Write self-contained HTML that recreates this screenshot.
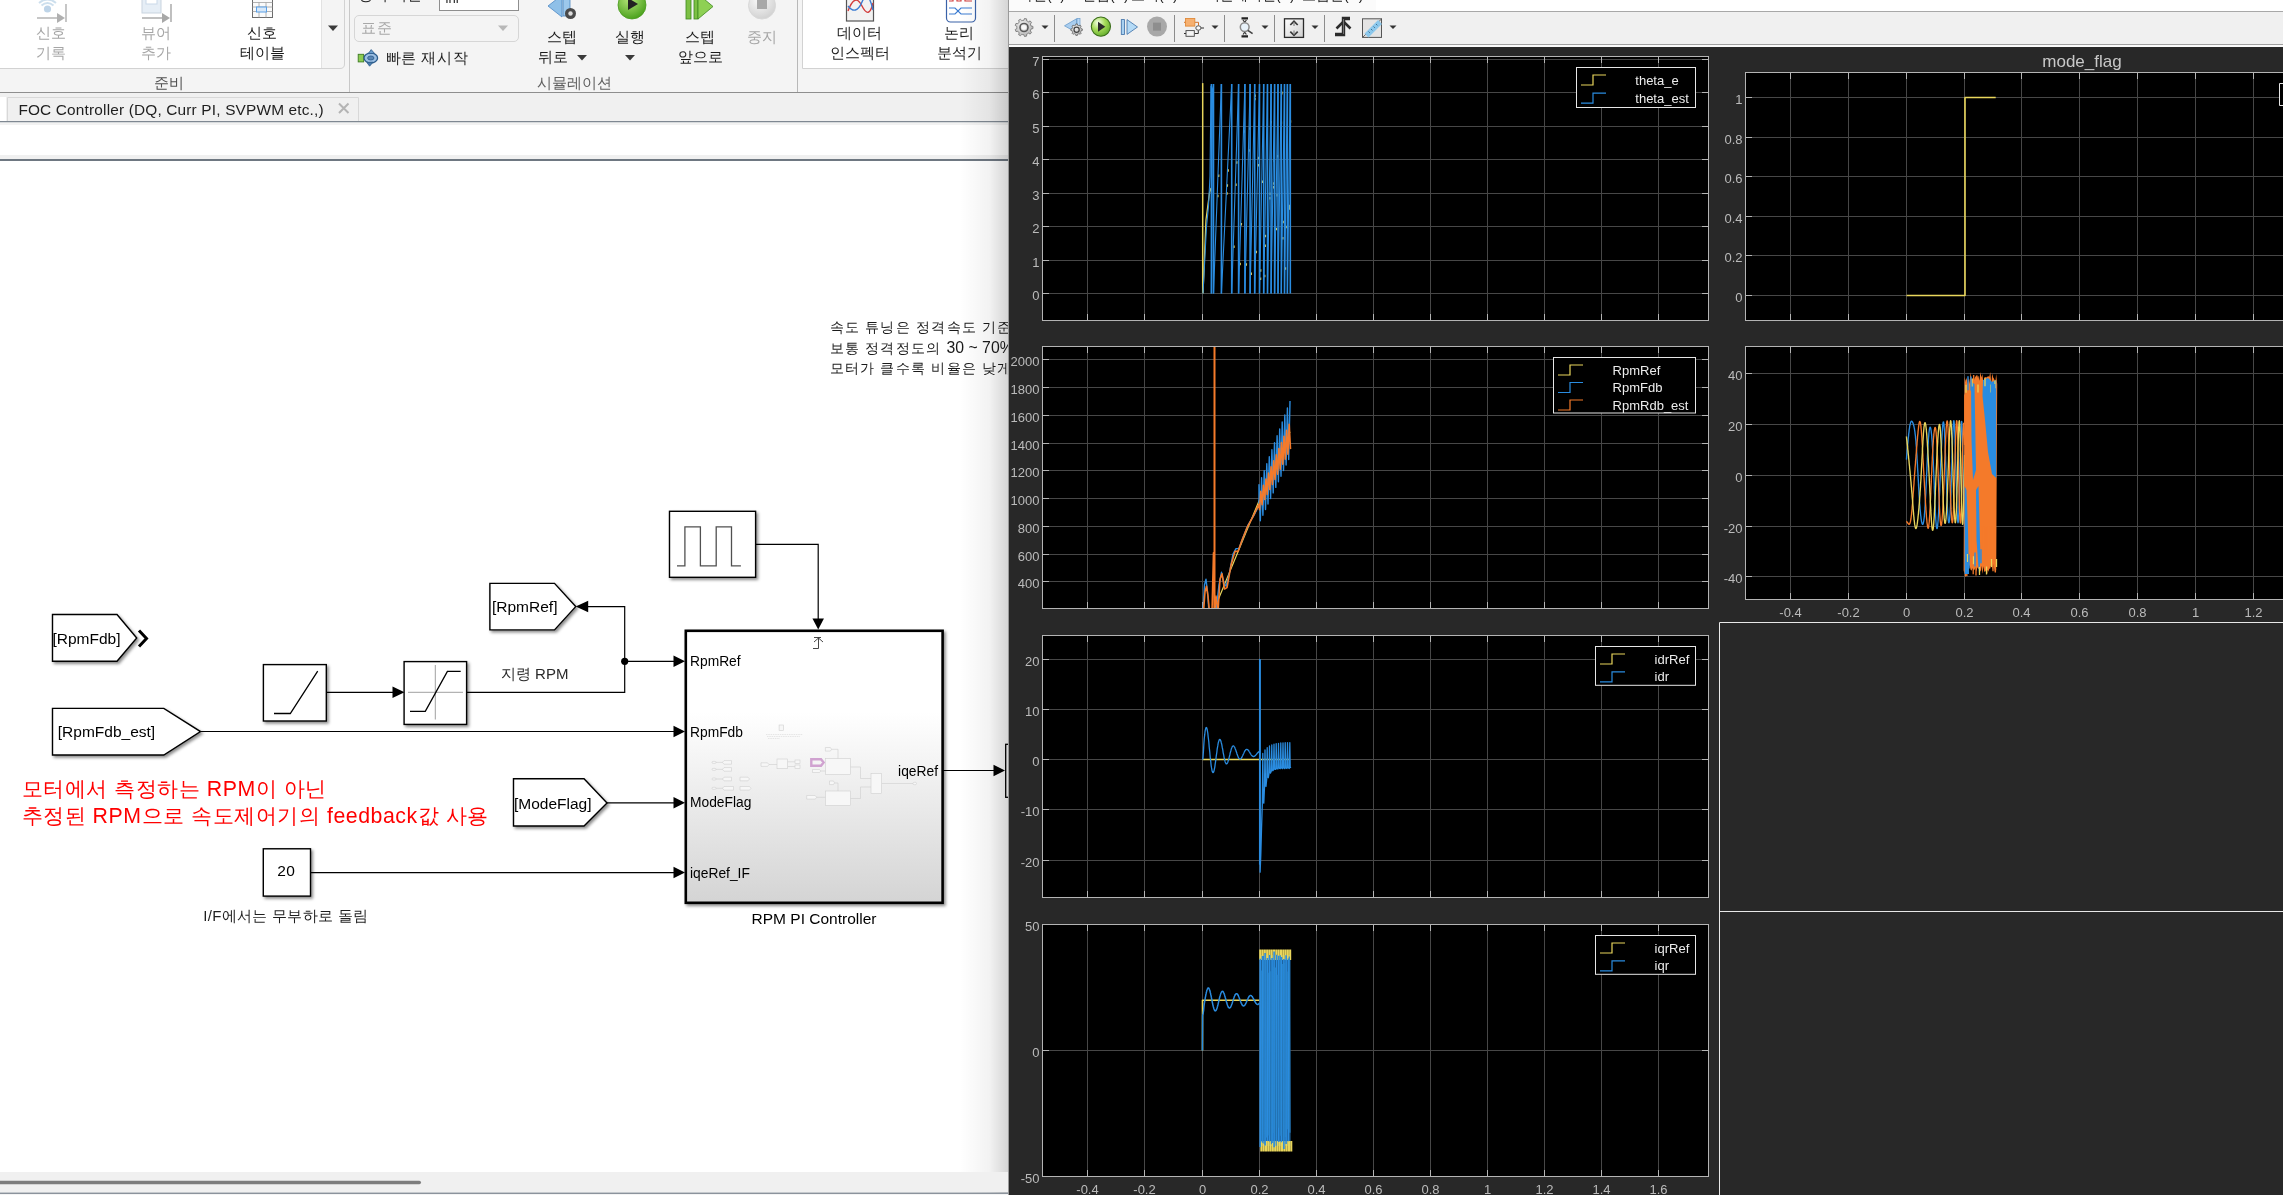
<!DOCTYPE html>
<html><head><meta charset="utf-8"><style>
html,body{margin:0;padding:0;width:2283px;height:1195px;overflow:hidden;background:#fff;font-family:"Liberation Sans",sans-serif;}
svg{display:block;will-change:transform}
</style></head><body>
<svg width="2283" height="1195" viewBox="0 0 2283 1195">
<rect x="0" y="0" width="1009" height="92" fill="#f4f4f4"/>
<rect x="0" y="0" width="322" height="68" fill="#ffffff"/>
<path d="M321.5 0V68" stroke="#e2e2e2" stroke-width="1"/>
<path d="M0 68.5H340Q344.5 68.5 344.5 64V0" stroke="#d2d2d2" stroke-width="1" fill="none"/>
<path d="M349.5 0V92" stroke="#c8c8c8" stroke-width="1"/>
<path d="M797.5 0V92" stroke="#b8b8b8" stroke-width="1"/>
<rect x="802" y="0" width="207" height="68" fill="#ffffff"/>
<path d="M802.5 0V68.5H1009" stroke="#d2d2d2" stroke-width="1" fill="none"/>
<rect x="0" y="92" width="1009" height="1" fill="#8e8e8e"/>
<g opacity="0.9"><circle cx="47.5" cy="9" r="3.6" fill="#b8d0e6"/><path d="M39 3Q47.5 -4 56 3M41.5 5.5Q47.5 0.5 53.5 5.5" stroke="#c8dcec" stroke-width="2" fill="none"/><path d="M37 18H60" stroke="#b0b0b0" stroke-width="1.6"/><path d="M57 13L65 18L57 23Z" fill="#a8a8a8"/><path d="M66 4V22" stroke="#b0b0b0" stroke-width="1.6"/></g>
<g><rect x="142" y="-4" width="19" height="17" fill="#e6eef6" stroke="#c9d4df"/><rect x="146" y="-4" width="11" height="8" fill="#fff" stroke="#c9d8e8"/><path d="M142 18H165" stroke="#b0b0b0" stroke-width="1.6"/><path d="M162 13L170 18L162 23Z" fill="#a8a8a8"/><path d="M171 4V22" stroke="#b0b0b0" stroke-width="1.6"/></g>
<g><rect x="252.5" y="-3" width="20" height="20.5" fill="#fafafa" stroke="#6c6c6c"/><path d="M252.5 2.5H272.5M252.5 7H272.5M252.5 11.5H272.5M259 2.5V17.5M266 2.5V17.5" stroke="#a0a0a0" stroke-width="0.8"/><rect x="256.5" y="7" width="10" height="5" fill="#d8e8f8" stroke="#5aa0e6" stroke-width="1"/><rect x="253" y="-3" width="5" height="3" fill="#1a4fa0"/></g>
<text x="51" y="38" font-family="Liberation Sans" font-size="14.5" fill="#a6a6a6" text-anchor="middle" >신호</text>
<text x="51" y="58" font-family="Liberation Sans" font-size="14.5" fill="#a6a6a6" text-anchor="middle" >기록</text>
<text x="156" y="38" font-family="Liberation Sans" font-size="14.5" fill="#a6a6a6" text-anchor="middle" >뷰어</text>
<text x="156" y="58" font-family="Liberation Sans" font-size="14.5" fill="#a6a6a6" text-anchor="middle" >추가</text>
<text x="262" y="38" font-family="Liberation Sans" font-size="14.5" fill="#1c1c1c" text-anchor="middle" >신호</text>
<text x="262" y="58" font-family="Liberation Sans" font-size="14.5" fill="#1c1c1c" text-anchor="middle" >테이블</text>
<path d="M328 25.5H338L333 31Z" fill="#3a3a3a"/>
<text x="169" y="88" font-family="Liberation Sans" font-size="14.5" fill="#505050" text-anchor="middle" >준비</text>
<text x="358" y="0.3" font-family="Liberation Sans" font-size="14.5" fill="#222" text-anchor="start" >정지 시간</text>
<rect x="439.5" y="-3" width="79" height="13.5" fill="#fff" stroke="#8e8e8e"/>
<text x="445.5" y="3" font-family="Liberation Sans" font-size="13" fill="#222" text-anchor="start" >inf</text>
<rect x="354.5" y="15.5" width="164" height="26" rx="4.5" fill="#f4f4f4" stroke="#d6d6d6"/>
<text x="361" y="33" font-family="Liberation Sans" font-size="14.5" fill="#a8a8a8" text-anchor="start" letter-spacing="1">표준</text>
<path d="M498 25.5H508L503 31Z" fill="#b8b8b8"/>
<rect x="358.2" y="54.3" width="5.5" height="7.6" fill="#8ccc52" stroke="#3c7a22" stroke-width="0.9"/>
<ellipse cx="370.8" cy="58" rx="6.8" ry="5" fill="#9cc0e4" stroke="#2c5c8c" stroke-width="1.3"/>
<ellipse cx="370.8" cy="58" rx="3.2" ry="2" fill="#5a86b4" stroke="#2c5c8c" stroke-width="0.8"/>
<path d="M368.3 53.6L371.2 49.6L374.5 53.4Z" fill="#6a9ccc" stroke="#2c5c8c" stroke-width="0.8"/><path d="M366.8 62.4L369.6 66.2L373 62.2Z" fill="#4a7cac" stroke="#2c5c8c" stroke-width="0.8"/>
<text x="385.5" y="63" font-family="Liberation Sans" font-size="14.5" fill="#1c1c1c" text-anchor="start" letter-spacing="0.6">빠른 재시작</text>
<path d="M548 6L562 -5V17Z" fill="#8fc0e8" stroke="#4c88c4" stroke-width="0.8"/><rect x="563" y="-5" width="7" height="21" fill="#9cc8ec" stroke="#4c88c4" stroke-width="0.8"/>
<circle cx="570.5" cy="13.5" r="5.5" fill="#4a4a4a"/><circle cx="570.5" cy="13.5" r="2.2" fill="#ddd"/>
<text x="561.5" y="42" font-family="Liberation Sans" font-size="14.5" fill="#1c1c1c" text-anchor="middle" >스텝</text>
<text x="553" y="62" font-family="Liberation Sans" font-size="14.5" fill="#1c1c1c" text-anchor="middle" >뒤로</text>
<path d="M577 55H587L582 60.5Z" fill="#3a3a3a"/>
<defs><radialGradient id="gr" cx="0.4" cy="0.3" r="0.7"><stop offset="0" stop-color="#b6e67a"/><stop offset="1" stop-color="#4ca21e"/></radialGradient><radialGradient id="gg" cx="0.4" cy="0.3" r="0.7"><stop offset="0" stop-color="#fafafa"/><stop offset="1" stop-color="#d2d2d2"/></radialGradient></defs>
<circle cx="632" cy="5" r="14" fill="url(#gr)" stroke="#4a9a20" stroke-width="0.8"/><path d="M628 -2L638 4L628 10Z" fill="#222"/>
<text x="630" y="42" font-family="Liberation Sans" font-size="14.5" fill="#1c1c1c" text-anchor="middle" >실행</text>
<path d="M625 55H635L630 60.5Z" fill="#3a3a3a"/>
<rect x="686" y="-4" width="5" height="23" fill="#7cc044" stroke="#3e8a1e" stroke-width="0.8"/><rect x="694" y="-4" width="4" height="23" fill="#7cc044" stroke="#3e8a1e" stroke-width="0.8"/>
<path d="M698 -6L713 6.5L698 19Z" fill="#8ed054" stroke="#3e8a1e" stroke-width="0.8"/>
<text x="700" y="42" font-family="Liberation Sans" font-size="14.5" fill="#1c1c1c" text-anchor="middle" >스텝</text>
<text x="700" y="62" font-family="Liberation Sans" font-size="14.5" fill="#1c1c1c" text-anchor="middle" >앞으로</text>
<circle cx="762" cy="5.5" r="13.5" fill="url(#gg)" stroke="#d8d8d8"/><rect x="757" y="0" width="10" height="9" fill="#a8a8a8"/>
<text x="761.5" y="42" font-family="Liberation Sans" font-size="14.5" fill="#a6a6a6" text-anchor="middle" >중지</text>
<text x="574" y="88" font-family="Liberation Sans" font-size="14.5" fill="#606060" text-anchor="middle" >시뮬레이션</text>
<rect x="846.5" y="-4" width="27" height="25" fill="#f2f2f2" stroke="#555" stroke-width="1.2"/>
<path d="M848 11Q855 -8 862 6T873 3" stroke="#d23c3c" stroke-width="1.4" fill="none"/><path d="M848 6Q856 16 862 2T873 10" stroke="#3c7cd2" stroke-width="1.4" fill="none"/>
<text x="859.5" y="38" font-family="Liberation Sans" font-size="14.5" fill="#1c1c1c" text-anchor="middle" >데이터</text>
<text x="859.5" y="58" font-family="Liberation Sans" font-size="14.5" fill="#1c1c1c" text-anchor="middle" >인스펙터</text>
<rect x="946.5" y="-6" width="29" height="28" rx="4" fill="#fff" stroke="#3a62a8" stroke-width="1.2"/>
<path d="M949 1H953V-4H957V1H961V-4H965V1H972" stroke="#d23c3c" stroke-width="1.2" fill="none"/><path d="M949 8H955L961 14H972M949 14H955L961 8H972" stroke="#3c7cd2" stroke-width="1.2" fill="none"/>
<text x="959" y="38" font-family="Liberation Sans" font-size="14.5" fill="#1c1c1c" text-anchor="middle" >논리</text>
<text x="959" y="58" font-family="Liberation Sans" font-size="14.5" fill="#1c1c1c" text-anchor="middle" >분석기</text>
<rect x="0" y="93" width="1009" height="28" fill="#f0f0f0"/>
<rect x="0" y="97" width="6" height="24" fill="#ffffff"/>
<path d="M7.5 121V97.5H358.5V121" stroke="#d8d8d8" stroke-width="1" fill="#f0f0f0"/>
<text x="18.4" y="114.8" font-family="Liberation Sans" font-size="15.4" fill="#1e1e1e" text-anchor="start" letter-spacing="0.17">FOC Controller (DQ, Curr PI, SVPWM etc.,)</text>
<path d="M339 103.5L348.5 113M348.5 103.5L339 113" stroke="#b4b4b4" stroke-width="2"/>
<rect x="0" y="121" width="1009" height="1.5" fill="#7f8892"/>
<rect x="0" y="122.5" width="1009" height="2.5" fill="#f2f2f2"/>
<rect x="0" y="125" width="1009" height="30" fill="#ffffff"/>
<rect x="0" y="155" width="1009" height="4" fill="#f0f0f0"/>
<rect x="0" y="159" width="1009" height="2" fill="#6e7781"/>
<rect x="0" y="161" width="1009" height="1011" fill="#ffffff"/>
<defs><filter id="sh" x="-10%" y="-10%" width="130%" height="130%"><feDropShadow dx="1.8" dy="2" stdDeviation="1.6" flood-color="#000" flood-opacity="0.45"/></filter><linearGradient id="subg" x1="0" y1="0" x2="0" y2="1"><stop offset="0.3" stop-color="#ffffff"/><stop offset="1" stop-color="#d4d4d4"/></linearGradient><linearGradient id="wsh" x1="0" y1="0" x2="1" y2="0"><stop offset="0" stop-color="#000" stop-opacity="0"/><stop offset="0.6" stop-color="#000" stop-opacity="0.05"/><stop offset="1" stop-color="#000" stop-opacity="0.17"/></linearGradient></defs>
<text x="829.5" y="332.2" font-family="Liberation Sans" font-size="14" fill="#1a1a1a" letter-spacing="1.25">속도 튜닝은 정격속도 기준으로</text>
<text x="829.5" y="352.9" font-family="Liberation Sans" font-size="14" fill="#1a1a1a" letter-spacing="1.25">보통 정격정도의 <tspan font-size="15.8" letter-spacing="0">30 ~ 70%</tspan> 수준</text>
<text x="829.5" y="373.2" font-family="Liberation Sans" font-size="14" fill="#1a1a1a" letter-spacing="1.25">모터가 클수록 비율은 낮게 설정</text>
<path d="M52.5 614.5H117L136.7 638L117 661.2H52.5Z" fill="#fff" stroke="#000" stroke-width="1.4" filter="url(#sh)"/>
<text x="52.5" y="643.8" font-family="Liberation Sans" font-size="15.5" fill="#000" text-anchor="start" >[RpmFdb]</text>
<path d="M139 630.5L146.5 638.5L139 646.5" stroke="#000" stroke-width="3" fill="none"/>
<path d="M52.5 708.4H163.8L200.5 731.6L163.8 755H52.5Z" fill="#fff" stroke="#000" stroke-width="1.4" filter="url(#sh)"/>
<text x="57.8" y="736.8" font-family="Liberation Sans" font-size="15.5" fill="#000" text-anchor="start" >[RpmFdb_est]</text>
<path d="M200.5 731.5H674" stroke="#000" stroke-width="1.2"/>
<path d="M685 731.5L673.5 725.75V737.25Z" fill="#000"/>
<rect x="263.4" y="664.6" width="62.9" height="56.4" fill="#fff" stroke="#000" stroke-width="1.4" filter="url(#sh)"/>
<path d="M274 713.5H290.3L317.7 671.2" stroke="#000" stroke-width="1.3" fill="none"/>
<path d="M326.3 692.3H393" stroke="#000" stroke-width="1.2"/>
<path d="M404.5 692.3L392.5 686.55V698.05Z" fill="#000"/>
<rect x="404.1" y="661.6" width="62.5" height="62.8" fill="#fff" stroke="#000" stroke-width="1.4" filter="url(#sh)"/>
<path d="M435.3 665V719.5M408 692.3H463" stroke="#a0a0a0" stroke-width="1"/>
<path d="M410 711.3H425.3L447.4 671.4H460.7" stroke="#000" stroke-width="1.3" fill="none"/>
<path d="M466.6 692.3H624.7V606.6H588" stroke="#000" stroke-width="1.2" fill="none"/>
<path d="M575.7 606.6L588.2 600.85V612.35Z" fill="#000"/>
<circle cx="624.7" cy="661.3" r="3.6" fill="#000"/>
<path d="M624.7 661.3H674" stroke="#000" stroke-width="1.2"/>
<path d="M685 661.3L673.5 655.55V667.05Z" fill="#000"/>
<path d="M489.9 583.4H554.5L575.7 606.6L554.5 629.9H489.9Z" fill="#fff" stroke="#000" stroke-width="1.4" filter="url(#sh)"/>
<text x="492" y="611.8" font-family="Liberation Sans" font-size="15.5" fill="#000" text-anchor="start" >[RpmRef]</text>
<text x="500.9" y="679.1" font-family="Liberation Sans" font-size="15" fill="#2a2a2a" text-anchor="start" >지령 RPM</text>
<rect x="669.5" y="511.3" width="86.1" height="66" fill="#fff" stroke="#000" stroke-width="1.4" filter="url(#sh)"/>
<path d="M677 565.8H684.9V526.8H700.4V565.8H716.2V526.8H731.5V565.8H740.9" stroke="#505050" stroke-width="1.3" fill="none"/>
<path d="M755.6 544.4H818.2V619" stroke="#000" stroke-width="1.2" fill="none"/>
<path d="M818.2 629.5L812.45 618.5H823.95Z" fill="#000"/>
<rect x="685.8" y="630.8" width="256.8" height="272" fill="url(#subg)" stroke="#000" stroke-width="2.6" filter="url(#sh)"/>
<g stroke="#cfcfcf" stroke-width="0.6" fill="#f7f7f7"><rect x="779.1" y="725" width="4.5" height="5.6"/><path d="M766 734.5h37M767 736.5h33M768 738.5h12" stroke="#dcdcdc" stroke-width="0.7" fill="none" stroke-dasharray="1.5 0.8"/><path d="M716 762.4h8M716 769.4h8M716 779h8M716 788.3h8" fill="none"/><rect x="712" y="761.4" width="4" height="2" rx="1"/><rect x="712" y="768.4" width="4" height="2" rx="1"/><rect x="712" y="778" width="4" height="2" rx="1"/><rect x="712" y="787.3" width="4" height="2" rx="1"/><path d="M724 760.6h7.5v3.6h-7.5l-1.5-1.8z"/><path d="M724 767.6h7.5v3.6h-7.5l-1.5-1.8z"/><path d="M724 777.2h7.5v3.6h-7.5l-1.5-1.8z"/><path d="M724 786.5h9.5v3.6h-9.5l-1.5-1.8z"/><path d="M740 777.2h8l1.5 1.8-1.5 1.8h-8z"/><path d="M740 786.5h9.5l1.5 1.8-1.5 1.8h-9.5z"/><path d="M761 762.8h6.5l1.5 1.8-1.5 1.8h-6.5z"/><path d="M769 764.5h8M787.6 761.8h7.5M787.6 766.5h7.5" fill="none"/><rect x="777" y="759" width="10.6" height="9.7"/><rect x="795" y="760" width="5" height="3.5"/><rect x="795" y="765" width="5" height="3.5"/><rect x="825.4" y="758.5" width="25.2" height="16"/><rect x="825.4" y="791" width="25.2" height="14.5"/><path d="M825.4 747.5h5l1.2 1.8-1.2 1.8h-5z"/><path d="M831.6 749.3h6.4v9.2M834 783h4v8" fill="none"/><path d="M829.5 781h4l1 1.8-1 1.8h-4z"/><path d="M812.5 769.5h7l1.3 1.5-1.3 1.5h-7z"/><path d="M820.8 771h4.6" fill="none"/><path d="M806.7 795.5h8.5l1.5 1.8-1.5 1.8h-8.5z"/><path d="M816.7 797.3h8.7" fill="none"/><path d="M850.6 767H860.5V778.5H871M850.6 798.5H860.5V787H871M881.6 783.5H913" fill="none"/><rect x="871" y="773.3" width="10.6" height="20.2"/><rect x="913" y="782.3" width="3.5" height="2.4" rx="1.2"/></g>
<path d="M811.3 759.3H821L823.6 762.5L821 765.8H811.3Z" fill="none" stroke="#d0a2d0" stroke-width="2.4"/>
<path d="M813 648.5H818.5M818.5 648.5V638M814 642L818.5 638L823 642M814 637.5H821" stroke="#333" stroke-width="0.9" fill="none"/>
<text x="690" y="666.4" font-family="Liberation Sans" font-size="13.8" fill="#000" text-anchor="start" >RpmRef</text>
<text x="690" y="736.9" font-family="Liberation Sans" font-size="13.8" fill="#000" text-anchor="start" >RpmFdb</text>
<text x="690" y="806.6" font-family="Liberation Sans" font-size="13.8" fill="#000" text-anchor="start" >ModeFlag</text>
<text x="690" y="877.8" font-family="Liberation Sans" font-size="13.8" fill="#000" text-anchor="start" >iqeRef_IF</text>
<text x="938" y="775.9" font-family="Liberation Sans" font-size="13.8" fill="#000" text-anchor="end" >iqeRef</text>
<text x="814" y="924" font-family="Liberation Sans" font-size="15.5" fill="#000" text-anchor="middle" >RPM PI Controller</text>
<path d="M513.5 778.8H584L607 803L584 826H513.5Z" fill="#fff" stroke="#000" stroke-width="1.4" filter="url(#sh)"/>
<text x="514" y="808.5" font-family="Liberation Sans" font-size="15.5" fill="#000" text-anchor="start" >[ModeFlag]</text>
<path d="M607 802.8H674" stroke="#000" stroke-width="1.2"/>
<path d="M685 802.8L673.5 797.05V808.55Z" fill="#000"/>
<rect x="263.3" y="848.8" width="47.2" height="47.3" fill="#fff" stroke="#000" stroke-width="1.4" filter="url(#sh)"/>
<text x="286.3" y="875.9" font-family="Liberation Sans" font-size="15.5" fill="#000" text-anchor="middle" letter-spacing="0.5">20</text>
<path d="M310.5 872.6H674" stroke="#000" stroke-width="1.2"/>
<path d="M685 872.6L673.5 866.85V878.35Z" fill="#000"/>
<text x="203.3" y="921" font-family="Liberation Sans" font-size="15" fill="#1e1e1e" text-anchor="start" letter-spacing="0.3">I/F에서는 무부하로 돌림</text>
<path d="M943 770.5H994" stroke="#000" stroke-width="1.2"/>
<path d="M1005 770.5L993.5 764.75V776.25Z" fill="#000"/>
<rect x="1005.7" y="744.3" width="20" height="53" fill="#fff" stroke="#000" stroke-width="1.3"/>
<text x="21.5" y="796.2" font-family="Liberation Sans" font-size="21.3" fill="#ff0000" text-anchor="start" letter-spacing="0.55">모터에서 측정하는 RPM이 아닌</text>
<text x="21.5" y="823" font-family="Liberation Sans" font-size="21.3" fill="#ff0000" text-anchor="start" letter-spacing="0.55">추정된 RPM으로 속도제어기의 feedback값 사용</text>
<rect x="960" y="0" width="49" height="1195" fill="url(#wsh)"/>
<rect x="0" y="1172" width="1009" height="20" fill="#f0f0f0"/>
<rect x="-3" y="1180.8" width="424" height="3.4" rx="1.7" fill="#7d7d7d"/>
<rect x="0" y="1192.5" width="1009" height="1.5" fill="#8b939c"/>
<rect x="0" y="1194" width="1009" height="1" fill="#f4f4f4"/>
<defs><clipPath id="c1"><rect x="1043" y="57" width="665" height="263"/></clipPath><clipPath id="c3"><rect x="1043" y="347" width="665" height="261"/></clipPath><clipPath id="c4"><rect x="1746" y="347" width="554" height="252"/></clipPath><clipPath id="c5"><rect x="1043" y="636" width="665" height="261"/></clipPath><clipPath id="c7"><rect x="1043" y="925" width="665" height="251"/></clipPath></defs>
<rect x="1009" y="0" width="1274" height="1195" fill="#282828"/>
<rect x="1009" y="0" width="1274" height="11" fill="#fbfbfb"/>
<rect x="1009" y="11" width="1274" height="1" fill="#a8a8a8"/>
<rect x="1009" y="12" width="1274" height="32" fill="#f0f0f0"/>
<rect x="1009" y="44" width="1274" height="1" fill="#a0a0a0"/>
<rect x="1009" y="45" width="1274" height="2" fill="#fafafa"/>
<rect x="1008" y="0" width="1" height="1195" fill="#9a9a9a"/>
<rect x="1042" y="56" width="667" height="265" fill="#000"/>
<path d="M1087.5 56V320M1144.5 56V320M1202.5 56V320M1259.5 56V320M1316.5 56V320M1373.5 56V320M1430.5 56V320M1487.5 56V320M1544.5 56V320M1601.5 56V320M1658.5 56V320M1042 293.5H1708M1042 260.5H1708M1042 226.5H1708M1042 193.5H1708M1042 159.5H1708M1042 126.5H1708M1042 92.5H1708M1042 59.5H1708" stroke="#474747" stroke-width="1" fill="none"/>
<path d="M1087.5 57v6M1087.5 320v-6M1144.5 57v6M1144.5 320v-6M1202.5 57v6M1202.5 320v-6M1259.5 57v6M1259.5 320v-6M1316.5 57v6M1316.5 320v-6M1373.5 57v6M1373.5 320v-6M1430.5 57v6M1430.5 320v-6M1487.5 57v6M1487.5 320v-6M1544.5 57v6M1544.5 320v-6M1601.5 57v6M1601.5 320v-6M1658.5 57v6M1658.5 320v-6M1043 293.5h6M1708 293.5h-6M1043 260.5h6M1708 260.5h-6M1043 226.5h6M1708 226.5h-6M1043 193.5h6M1708 193.5h-6M1043 159.5h6M1708 159.5h-6M1043 126.5h6M1708 126.5h-6M1043 92.5h6M1708 92.5h-6M1043 59.5h6M1708 59.5h-6" stroke="#b4b4b4" stroke-width="1" fill="none"/>
<rect x="1042.5" y="56.5" width="666" height="264" fill="none" stroke="#b4b4b4" stroke-width="1"/>
<text x="1039.5" y="299.7" text-anchor="end" font-family="Liberation Sans" font-size="13" fill="#bbbbbb">0</text>
<text x="1039.5" y="266.7" text-anchor="end" font-family="Liberation Sans" font-size="13" fill="#bbbbbb">1</text>
<text x="1039.5" y="232.7" text-anchor="end" font-family="Liberation Sans" font-size="13" fill="#bbbbbb">2</text>
<text x="1039.5" y="199.7" text-anchor="end" font-family="Liberation Sans" font-size="13" fill="#bbbbbb">3</text>
<text x="1039.5" y="165.7" text-anchor="end" font-family="Liberation Sans" font-size="13" fill="#bbbbbb">4</text>
<text x="1039.5" y="132.7" text-anchor="end" font-family="Liberation Sans" font-size="13" fill="#bbbbbb">5</text>
<text x="1039.5" y="98.7" text-anchor="end" font-family="Liberation Sans" font-size="13" fill="#bbbbbb">6</text>
<text x="1039.5" y="65.7" text-anchor="end" font-family="Liberation Sans" font-size="13" fill="#bbbbbb">7</text>
<polyline points="1202.7,83.1 1202.7,292.8" fill="none" stroke="#e9d65c" stroke-width="1.5" stroke-linejoin="round" clip-path="url(#c1)" />
<path d="M1203 293.5L1206 219.8L1209.5 193L1211 188" stroke="#e9d65c" stroke-width="1.3" fill="none" clip-path="url(#c1)"/>
<path d="M1217.9 197.3l0.1 -2.5M1218.7 177l0.1 -2.5M1221.3 108l0.1 -2.5M1227 194.8l0.1 -2.5M1227.4 186.8l0.1 -2.5M1228.2 171.8l0.1 -2.5M1234 248l0.1 -2.5M1236 186.1l0.1 -2.5M1236.8 163.7l0.1 -2.5M1244.2 132.8l0.1 -2.5M1240.2 265.2l0.1 -2.5M1241.4 225.5l0.1 -2.5M1246.4 265.8l0.1 -2.5M1249.7 129.7l0.1 -2.5M1249.2 151.7l0.1 -2.5M1251.3 275.1l0.1 -2.5M1255.2 97l0.1 -2.5M1255.1 100.3l0.1 -2.5M1258.6 159.2l0.1 -2.5M1258.4 166.4l0.1 -2.5M1256.4 253.2l0.1 -2.5M1260.6 280.1l0.1 -2.5M1262.5 182.9l0.1 -2.5M1260.7 271.7l0.1 -2.5M1265.3 247l0 -2.5M1265.5 237.2l0 -2.5M1264.8 277.3l0 -2.5M1270 195.1l0 -2.5M1269.9 199.6l0 -2.5M1271.2 123.5l0 -2.5M1273.7 184.7l0 -2.5M1274.1 161.7l0 -2.5M1273.6 188.4l0 -2.5M1277.6 157.6l0 -2.5M1277 196.4l0 -2.5M1276.4 230.3l0 -2.5M1281.9 94.1l0 -2.5M1281.9 94.5l0 -2.5M1281.5 123.9l0 -2.5M1284.3 149l0 -2.5M1283.2 223.3l0 -2.5M1282.9 239.5l0 -2.5M1286.2 228.3l0 -2.5M1285.6 269.7l0 -2.5M1287.4 137.9l0 -2.5M1289.4 207.2l0 -2.5M1290.6 122.7l0 -2.5M1289.4 209.8l0 -2.5" stroke="#e9d65c" stroke-width="1.2" fill="none" clip-path="url(#c1)"/>
<path d="M1203 293.5L1206.5 226.5L1208.5 206.4L1210 176.2L1211 85.8M1211.4 293.5L1212.5 89.2L1213.5 85.8M1213.5 293.5L1221.4 84.1M1221.4 293.5L1231.7 84.1M1231.7 293.5L1238.6 84.1M1238.6 293.5L1244.9 84.1M1244.9 293.5L1250.1 84.1M1250.1 293.5L1254.7 84.1M1254.7 293.5L1259.5 84.1M1259.5 293.5L1263.7 84.1M1263.7 293.5L1267.5 84.1M1267.5 293.5L1271.1 84.1M1271.1 293.5L1274.6 84.1M1274.6 293.5L1278 84.1M1278 293.5L1281.3 84.1M1281.3 293.5L1284.5 84.1M1284.5 293.5L1287.4 84.1M1287.4 293.5L1290.3 84.1" stroke="#2a8ce0" stroke-width="1.1" fill="none" clip-path="url(#c1)"/>
<path d="M1211.4 84.1V293.5M1213.5 84.1V293.5M1221.4 84.1V293.5M1231.7 84.1V293.5M1238.6 84.1V293.5M1244.9 84.1V293.5M1250.1 84.1V293.5M1254.7 84.1V293.5M1259.5 84.1V293.5M1263.7 84.1V293.5M1267.5 84.1V293.5M1271.1 84.1V293.5M1274.6 84.1V293.5M1278 84.1V293.5M1281.3 84.1V293.5M1284.5 84.1V293.5M1287.4 84.1V293.5M1290.3 84.1V293.5" stroke="#2a8ce0" stroke-width="1.6" fill="none" clip-path="url(#c1)"/>
<rect x="1576.5" y="67.5" width="119" height="40" fill="#000" stroke="#e6e6e6" stroke-width="1"/>
<path d="M1581 85H1593V75H1606" fill="none" stroke="#e9d65c" stroke-width="1.2"/>
<text x="1635.3" y="84.5" font-family="Liberation Sans" font-size="13" fill="#ececec">theta_e</text>
<path d="M1581 103.1H1593V93.1H1606" fill="none" stroke="#2a8ce0" stroke-width="1.2"/>
<text x="1635.3" y="102.6" font-family="Liberation Sans" font-size="13" fill="#ececec">theta_est</text>
<rect x="1745" y="72" width="556" height="249" fill="#000"/>
<path d="M1790.5 72V320M1848.5 72V320M1906.5 72V320M1964.5 72V320M2021.5 72V320M2079.5 72V320M2137.5 72V320M2195.5 72V320M2253.5 72V320M1745 295.5H2300M1745 255.5H2300M1745 216.5H2300M1745 176.5H2300M1745 137.5H2300M1745 97.5H2300" stroke="#474747" stroke-width="1" fill="none"/>
<path d="M1790.5 73v6M1790.5 320v-6M1848.5 73v6M1848.5 320v-6M1906.5 73v6M1906.5 320v-6M1964.5 73v6M1964.5 320v-6M2021.5 73v6M2021.5 320v-6M2079.5 73v6M2079.5 320v-6M2137.5 73v6M2137.5 320v-6M2195.5 73v6M2195.5 320v-6M2253.5 73v6M2253.5 320v-6M1746 295.5h6M2300 295.5h-6M1746 255.5h6M2300 255.5h-6M1746 216.5h6M2300 216.5h-6M1746 176.5h6M2300 176.5h-6M1746 137.5h6M2300 137.5h-6M1746 97.5h6M2300 97.5h-6" stroke="#b4b4b4" stroke-width="1" fill="none"/>
<rect x="1745.5" y="72.5" width="555" height="248" fill="none" stroke="#b4b4b4" stroke-width="1"/>
<text x="1742.5" y="301.7" text-anchor="end" font-family="Liberation Sans" font-size="13" fill="#bbbbbb">0</text>
<text x="1742.5" y="261.7" text-anchor="end" font-family="Liberation Sans" font-size="13" fill="#bbbbbb">0.2</text>
<text x="1742.5" y="222.7" text-anchor="end" font-family="Liberation Sans" font-size="13" fill="#bbbbbb">0.4</text>
<text x="1742.5" y="182.7" text-anchor="end" font-family="Liberation Sans" font-size="13" fill="#bbbbbb">0.6</text>
<text x="1742.5" y="143.7" text-anchor="end" font-family="Liberation Sans" font-size="13" fill="#bbbbbb">0.8</text>
<text x="1742.5" y="103.7" text-anchor="end" font-family="Liberation Sans" font-size="13" fill="#bbbbbb">1</text>
<text x="2082" y="66.8" text-anchor="middle" font-family="Liberation Sans" font-size="17" fill="#c8c8c8">mode_flag</text>
<polyline points="1906.5,295.5 1965,295.5 1965,97.5 1995.7,97.5" fill="none" stroke="#e9d65c" stroke-width="1.6" stroke-linejoin="round" />
<path d="M2283.5 83.5H2279.5V105.5H2283.5" stroke="#e6e6e6" stroke-width="1" fill="#000"/>
<rect x="1042" y="346" width="667" height="263" fill="#000"/>
<path d="M1087.5 346V608M1144.5 346V608M1202.5 346V608M1259.5 346V608M1316.5 346V608M1373.5 346V608M1430.5 346V608M1487.5 346V608M1544.5 346V608M1601.5 346V608M1658.5 346V608M1042 581.5H1708M1042 554.5H1708M1042 526.5H1708M1042 498.5H1708M1042 470.5H1708M1042 443.5H1708M1042 415.5H1708M1042 387.5H1708M1042 359.5H1708" stroke="#474747" stroke-width="1" fill="none"/>
<path d="M1087.5 347v6M1087.5 608v-6M1144.5 347v6M1144.5 608v-6M1202.5 347v6M1202.5 608v-6M1259.5 347v6M1259.5 608v-6M1316.5 347v6M1316.5 608v-6M1373.5 347v6M1373.5 608v-6M1430.5 347v6M1430.5 608v-6M1487.5 347v6M1487.5 608v-6M1544.5 347v6M1544.5 608v-6M1601.5 347v6M1601.5 608v-6M1658.5 347v6M1658.5 608v-6M1043 581.5h6M1708 581.5h-6M1043 554.5h6M1708 554.5h-6M1043 526.5h6M1708 526.5h-6M1043 498.5h6M1708 498.5h-6M1043 470.5h6M1708 470.5h-6M1043 443.5h6M1708 443.5h-6M1043 415.5h6M1708 415.5h-6M1043 387.5h6M1708 387.5h-6M1043 359.5h6M1708 359.5h-6" stroke="#b4b4b4" stroke-width="1" fill="none"/>
<rect x="1042.5" y="346.5" width="666" height="262" fill="none" stroke="#b4b4b4" stroke-width="1"/>
<text x="1039.5" y="587.7" text-anchor="end" font-family="Liberation Sans" font-size="13" fill="#bbbbbb">400</text>
<text x="1039.5" y="560.7" text-anchor="end" font-family="Liberation Sans" font-size="13" fill="#bbbbbb">600</text>
<text x="1039.5" y="532.7" text-anchor="end" font-family="Liberation Sans" font-size="13" fill="#bbbbbb">800</text>
<text x="1039.5" y="504.7" text-anchor="end" font-family="Liberation Sans" font-size="13" fill="#bbbbbb">1000</text>
<text x="1039.5" y="476.7" text-anchor="end" font-family="Liberation Sans" font-size="13" fill="#bbbbbb">1200</text>
<text x="1039.5" y="449.7" text-anchor="end" font-family="Liberation Sans" font-size="13" fill="#bbbbbb">1400</text>
<text x="1039.5" y="421.7" text-anchor="end" font-family="Liberation Sans" font-size="13" fill="#bbbbbb">1600</text>
<text x="1039.5" y="393.7" text-anchor="end" font-family="Liberation Sans" font-size="13" fill="#bbbbbb">1800</text>
<text x="1039.5" y="365.7" text-anchor="end" font-family="Liberation Sans" font-size="13" fill="#bbbbbb">2000</text>
<polyline points="1214,609.9 1260,498.5 1290,431.7" fill="none" stroke="#e9d65c" stroke-width="1.2" stroke-linejoin="round" clip-path="url(#c3)" />
<polyline points="1203,612 1204.5,584.8 1206,579.3 1207.5,591.8 1209,612 1216,612 1219,584.8 1221.5,572.3 1224,583.4 1226,586.2 1229,575.1 1233,554.2 1236,548.6 1239,548.6 1243,537.5 1248,525 1254,515.2 1259,505.5 1259,484.6 1260.3,520.8 1261.6,477.6 1262.9,515.2 1264.2,470.6 1265.5,509.6 1266.8,463.7 1268,504.1 1269.3,456.7 1270.6,498.5 1271.9,449.8 1273.2,492.9 1274.5,442.8 1275.8,487.4 1277.1,435.8 1278.4,481.8 1279.7,428.9 1281,476.2 1282.2,421.9 1283.5,470.6 1284.8,414.9 1286.1,465.1 1287.4,408 1288.7,459.5 1290,401" fill="none" stroke="#2a8ce0" stroke-width="1.4" stroke-linejoin="round" clip-path="url(#c3)" />
<polyline points="1203.5,612 1205,591.8 1206.5,586.2 1208,596 1209.5,612 1212,612 1213.5,552.8 1214.5,612 1216,596 1218,612 1220,579.3 1222,573.7 1224.5,589 1227,587.6 1231,565.3 1235,551.4 1238,551.4 1242,540.3 1247,527.7 1253,516.6 1259,504.1 1259.5,509.6 1260.8,491.3 1262.1,504.6 1263.4,485.2 1264.7,499.5 1266,479.1 1267.2,494.5 1268.5,473 1269.8,489.4 1271.1,466.9 1272.4,484.4 1273.7,460.8 1275,479.4 1276.3,454.7 1277.6,474.3 1278.9,448.6 1280.2,469.3 1281.5,442.5 1282.8,464.2 1284,436.4 1285.3,459.2 1286.6,430.4 1287.9,454.1 1289.2,424.3 1290.5,449.1" fill="none" stroke="#f47a2a" stroke-width="1.6" stroke-linejoin="round" clip-path="url(#c3)" />
<polyline points="1214.5,346 1214.5,612" fill="none" stroke="#f47a2a" stroke-width="2.0" stroke-linejoin="round" clip-path="url(#c3)" />
<rect x="1553.5" y="357.5" width="142" height="55.5" fill="#000" stroke="#e6e6e6" stroke-width="1"/>
<path d="M1558 375H1570V365H1583" fill="none" stroke="#e9d65c" stroke-width="1.2"/>
<text x="1612.6" y="374.5" font-family="Liberation Sans" font-size="13" fill="#ececec">RpmRef</text>
<path d="M1558 392.5H1570V382.5H1583" fill="none" stroke="#2a8ce0" stroke-width="1.2"/>
<text x="1612.6" y="392" font-family="Liberation Sans" font-size="13" fill="#ececec">RpmFdb</text>
<path d="M1558 410H1570V400H1583" fill="none" stroke="#f47a2a" stroke-width="1.2"/>
<text x="1612.6" y="409.5" font-family="Liberation Sans" font-size="13" fill="#ececec">RpmRdb_est</text>
<rect x="1745" y="346" width="556" height="254" fill="#000"/>
<path d="M1790.5 346V599M1848.5 346V599M1906.5 346V599M1964.5 346V599M2021.5 346V599M2079.5 346V599M2137.5 346V599M2195.5 346V599M2253.5 346V599M1745 576.5H2300M1745 526.5H2300M1745 475.5H2300M1745 424.5H2300M1745 373.5H2300" stroke="#474747" stroke-width="1" fill="none"/>
<path d="M1790.5 347v6M1790.5 599v-6M1848.5 347v6M1848.5 599v-6M1906.5 347v6M1906.5 599v-6M1964.5 347v6M1964.5 599v-6M2021.5 347v6M2021.5 599v-6M2079.5 347v6M2079.5 599v-6M2137.5 347v6M2137.5 599v-6M2195.5 347v6M2195.5 599v-6M2253.5 347v6M2253.5 599v-6M1746 576.5h6M2300 576.5h-6M1746 526.5h6M2300 526.5h-6M1746 475.5h6M2300 475.5h-6M1746 424.5h6M2300 424.5h-6M1746 373.5h6M2300 373.5h-6" stroke="#b4b4b4" stroke-width="1" fill="none"/>
<rect x="1745.5" y="346.5" width="555" height="253" fill="none" stroke="#b4b4b4" stroke-width="1"/>
<text x="1742.5" y="582.7" text-anchor="end" font-family="Liberation Sans" font-size="13" fill="#bbbbbb">-40</text>
<text x="1742.5" y="532.7" text-anchor="end" font-family="Liberation Sans" font-size="13" fill="#bbbbbb">-20</text>
<text x="1742.5" y="481.7" text-anchor="end" font-family="Liberation Sans" font-size="13" fill="#bbbbbb">0</text>
<text x="1742.5" y="430.7" text-anchor="end" font-family="Liberation Sans" font-size="13" fill="#bbbbbb">20</text>
<text x="1742.5" y="379.7" text-anchor="end" font-family="Liberation Sans" font-size="13" fill="#bbbbbb">40</text>
<text x="1790.5" y="617" text-anchor="middle" font-family="Liberation Sans" font-size="13" fill="#bbbbbb">-0.4</text>
<text x="1848.5" y="617" text-anchor="middle" font-family="Liberation Sans" font-size="13" fill="#bbbbbb">-0.2</text>
<text x="1906.5" y="617" text-anchor="middle" font-family="Liberation Sans" font-size="13" fill="#bbbbbb">0</text>
<text x="1964.5" y="617" text-anchor="middle" font-family="Liberation Sans" font-size="13" fill="#bbbbbb">0.2</text>
<text x="2021.5" y="617" text-anchor="middle" font-family="Liberation Sans" font-size="13" fill="#bbbbbb">0.4</text>
<text x="2079.5" y="617" text-anchor="middle" font-family="Liberation Sans" font-size="13" fill="#bbbbbb">0.6</text>
<text x="2137.5" y="617" text-anchor="middle" font-family="Liberation Sans" font-size="13" fill="#bbbbbb">0.8</text>
<text x="2195.5" y="617" text-anchor="middle" font-family="Liberation Sans" font-size="13" fill="#bbbbbb">1</text>
<text x="2253.5" y="617" text-anchor="middle" font-family="Liberation Sans" font-size="13" fill="#bbbbbb">1.2</text>
<polyline points="1906.4,459.6 1906.5,458.6 1906.6,457.7 1906.6,456.7 1906.7,455.8 1906.8,454.8 1906.9,453.9 1907,452.9 1907.1,452 1907.1,451 1907.2,450.1 1907.3,449.1 1907.4,448.2 1907.5,447.2 1907.6,446.3 1907.6,445.3 1907.7,444.4 1907.8,443.5 1907.9,442.6 1908,441.7 1908.1,440.8 1908.1,439.9 1908.2,439 1908.3,438.2 1908.4,437.3 1908.5,436.5 1908.6,435.7 1908.6,434.9 1908.7,434.1 1908.8,433.3 1908.9,432.6 1909,431.9 1909.1,431.2 1909.1,430.5 1909.2,429.8 1909.3,429.2 1909.4,428.6 1909.5,428 1909.6,427.5 1909.6,426.9 1909.7,426.4 1909.8,425.9 1909.9,425.4 1910,425 1910.1,424.6 1910.1,424.2 1910.2,423.9 1910.3,423.5 1910.4,423.2 1910.5,422.9 1910.6,422.7 1910.6,422.4 1910.7,422.2 1910.8,422 1910.9,421.8 1911,421.7 1911.1,421.6 1911.1,421.5 1911.2,421.4 1911.3,421.3 1911.4,421.2 1911.5,421.2 1911.6,421.2 1911.6,421.2 1911.7,421.2 1911.8,421.3 1911.9,421.3 1912,421.4 1912.1,421.5 1912.1,421.5 1912.2,421.7 1912.3,421.8 1912.4,421.9 1912.5,422 1912.6,422.2 1912.6,422.4 1912.7,422.5 1912.8,422.7 1912.9,422.9 1913,423.1 1913.1,423.3 1913.1,423.6 1913.2,423.8 1913.3,424 1913.4,424.3 1913.5,424.6 1913.6,424.9 1913.6,425.2 1913.7,425.5 1913.8,425.8 1913.9,426.1 1914,426.5 1914,426.9 1914.1,427.3 1914.2,427.7 1914.3,428.1 1914.4,428.6 1914.5,429 1914.5,429.5 1914.6,430.1 1914.7,430.6 1914.8,431.2 1914.9,431.8 1915,432.4 1915,433 1915.1,433.7 1915.2,434.4 1915.3,435.2 1915.4,435.9 1915.5,436.7 1915.5,437.6 1915.6,438.4 1915.7,439.3 1915.8,440.3 1915.9,441.2 1916,442.2 1916,443.3 1916.1,444.3 1916.2,445.4 1916.3,446.5 1916.4,447.7 1916.5,448.9 1916.5,450.1 1916.6,451.4 1916.7,452.6 1916.8,453.9 1916.9,455.3 1917,456.6 1917,458 1917.1,459.4 1917.2,460.8 1917.3,462.3 1917.4,463.7 1917.5,465.2 1917.5,466.7 1917.6,468.2 1917.7,469.7 1917.8,471.2 1917.9,472.7 1918,474.3 1918,475.8 1918.1,477.3 1918.2,478.9 1918.3,480.4 1918.4,481.9 1918.5,483.4 1918.5,484.9 1918.6,486.4 1918.7,487.8 1918.8,489.3 1918.9,490.7 1919,492.1 1919,493.5 1919.1,494.9 1919.2,496.2 1919.3,497.6 1919.4,498.8 1919.5,500.1 1919.5,501.3 1919.6,502.6 1919.7,503.7 1919.8,504.9 1919.9,506 1920,507.1 1920,508.1 1920.1,509.1 1920.2,510.1 1920.3,511.1 1920.4,512 1920.5,512.8 1920.5,513.7 1920.6,514.5 1920.7,515.3 1920.8,516 1920.9,516.7 1921,517.4 1921,518.1 1921.1,518.7 1921.2,519.3 1921.3,519.8 1921.4,520.3 1921.4,520.8 1921.5,521.3 1921.6,521.7 1921.7,522.1 1921.8,522.4 1921.9,522.8 1921.9,523.1 1922,523.3 1922.1,523.6 1922.2,523.8 1922.3,523.9 1922.4,524.1 1922.4,524.2 1922.5,524.2 1922.6,524.3 1922.7,524.3 1922.8,524.3 1922.9,524.2 1922.9,524.1 1923,523.9 1923.1,523.8 1923.2,523.5 1923.3,523.3 1923.4,523 1923.4,522.6 1923.5,522.3 1923.6,521.8 1923.7,521.3 1923.8,520.8 1923.9,520.2 1923.9,519.6 1924,519 1924.1,518.2 1924.2,517.5 1924.3,516.7 1924.4,515.8 1924.4,514.9 1924.5,513.9 1924.6,512.9 1924.7,511.8 1924.8,510.6 1924.9,509.5 1924.9,508.2 1925,506.9 1925.1,505.6 1925.2,504.2 1925.3,502.8 1925.4,501.3 1925.4,499.8 1925.5,498.3 1925.6,496.7 1925.7,495 1925.8,493.4 1925.9,491.7 1925.9,489.9 1926,488.2 1926.1,486.4 1926.2,484.6 1926.3,482.8 1926.4,480.9 1926.4,479.1 1926.5,477.2 1926.6,475.3 1926.7,473.5 1926.8,471.6 1926.9,469.7 1926.9,467.9 1927,466 1927.1,464.2 1927.2,462.4 1927.3,460.6 1927.4,458.9 1927.4,457.1 1927.5,455.4 1927.6,453.7 1927.7,452.1 1927.8,450.5 1927.9,448.9 1927.9,447.4 1928,446 1928.1,444.5 1928.2,443.2 1928.3,441.9 1928.3,440.6 1928.4,439.4 1928.5,438.2 1928.6,437.1 1928.7,436.1 1928.8,435.1 1928.8,434.2 1928.9,433.3 1929,432.5 1929.1,431.7 1929.2,431 1929.3,430.4 1929.3,429.8 1929.4,429.3 1929.5,428.9 1929.6,428.5 1929.7,428.1 1929.8,427.8 1929.8,427.6 1929.9,427.4 1930,427.3 1930.1,427.2 1930.2,427.2 1930.3,427.3 1930.3,427.4 1930.4,427.5 1930.5,427.7 1930.6,427.9 1930.7,428.2 1930.8,428.6 1930.8,429 1930.9,429.4 1931,429.9 1931.1,430.5 1931.2,431.1 1931.3,431.7 1931.3,432.4 1931.4,433.1 1931.5,433.9 1931.6,434.7 1931.7,435.6 1931.8,436.6 1931.8,437.5 1931.9,438.6 1932,439.7 1932.1,440.8 1932.2,442 1932.3,443.2 1932.3,444.5 1932.4,445.9 1932.5,447.2 1932.6,448.7 1932.7,450.2 1932.8,451.7 1932.8,453.3 1932.9,454.9 1933,456.6 1933.1,458.3 1933.2,460.1 1933.3,461.9 1933.3,463.7 1933.4,465.6 1933.5,467.5 1933.6,469.4 1933.7,471.4 1933.8,473.4 1933.8,475.4 1933.9,477.4 1934,479.5 1934.1,481.5 1934.2,483.6 1934.3,485.7 1934.3,487.8 1934.4,489.8 1934.5,491.9 1934.6,493.9 1934.7,496 1934.8,498 1934.8,499.9 1934.9,501.9 1935,503.8 1935.1,505.6 1935.2,507.5 1935.3,509.2 1935.3,510.9 1935.4,512.6 1935.5,514.2 1935.6,515.7 1935.7,517.2 1935.7,518.5 1935.8,519.8 1935.9,521.1 1936,522.2 1936.1,523.3 1936.2,524.2 1936.2,525.1 1936.3,525.9 1936.4,526.5 1936.5,527.1 1936.6,527.6 1936.7,528 1936.7,528.3 1936.8,528.5 1936.9,528.6 1937,528.6 1937.1,528.5 1937.2,528.4 1937.2,528.1 1937.3,527.7 1937.4,527.3 1937.5,526.7 1937.6,526.1 1937.7,525.4 1937.7,524.6 1937.8,523.7 1937.9,522.7 1938,521.7 1938.1,520.6 1938.2,519.5 1938.2,518.2 1938.3,517 1938.4,515.6 1938.5,514.2 1938.6,512.7 1938.7,511.2 1938.7,509.7 1938.8,508.1 1938.9,506.4 1939,504.8 1939.1,503 1939.2,501.3 1939.2,499.5 1939.3,497.7 1939.4,495.8 1939.5,494 1939.6,492.1 1939.7,490.1 1939.7,488.2 1939.8,486.3 1939.9,484.3 1940,482.3 1940.1,480.3 1940.2,478.3 1940.2,476.3 1940.3,474.3 1940.4,472.3 1940.5,470.2 1940.6,468.2 1940.7,466.2 1940.7,464.2 1940.8,462.2 1940.9,460.2 1941,458.2 1941.1,456.2 1941.2,454.3 1941.2,452.3 1941.3,450.4 1941.4,448.6 1941.5,446.7 1941.6,444.9 1941.7,443.1 1941.7,441.4 1941.8,439.7 1941.9,438.1 1942,436.5 1942.1,435 1942.2,433.5 1942.2,432.1 1942.3,430.8 1942.4,429.6 1942.5,428.4 1942.6,427.3 1942.7,426.3 1942.7,425.4 1942.8,424.6 1942.9,423.9 1943,423.3 1943.1,422.8 1943.1,422.4 1943.2,422.1 1943.3,422 1943.4,421.9 1943.5,422 1943.6,422.1 1943.6,422.4 1943.7,422.8 1943.8,423.4 1943.9,424 1944,424.8 1944.1,425.7 1944.1,426.7 1944.2,427.8 1944.3,429 1944.4,430.4 1944.5,431.8 1944.6,433.4 1944.6,435 1944.7,436.7 1944.8,438.6 1944.9,440.5 1945,442.5 1945.1,444.5 1945.1,446.6 1945.2,448.8 1945.3,451.1 1945.4,453.4 1945.5,455.7 1945.6,458.1 1945.6,460.5 1945.7,462.9 1945.8,465.3 1945.9,467.8 1946,470.2 1946.1,472.7 1946.1,475.1 1946.2,477.6 1946.3,480 1946.4,482.3 1946.5,484.7 1946.6,487 1946.6,489.3 1946.7,491.5 1946.8,493.7 1946.9,495.8 1947,497.8 1947.1,499.8 1947.1,501.7 1947.2,503.6 1947.3,505.4 1947.4,507.1 1947.5,508.7 1947.6,510.2 1947.6,511.7 1947.7,513 1947.8,514.3 1947.9,515.5 1948,516.6 1948.1,517.6 1948.1,518.6 1948.2,519.4 1948.3,520.1 1948.4,520.8 1948.5,521.4 1948.6,521.8 1948.6,522.2 1948.7,522.5 1948.8,522.6 1948.9,522.7 1949,522.7 1949.1,522.6 1949.1,522.4 1949.2,522 1949.3,521.6 1949.4,521.1 1949.5,520.5 1949.6,519.7 1949.6,518.9 1949.7,518 1949.8,516.9 1949.9,515.8 1950,514.5 1950.1,513.2 1950.1,511.7 1950.2,510.2 1950.3,508.5 1950.4,506.8 1950.5,504.9 1950.5,502.9 1950.6,500.9 1950.7,498.8 1950.8,496.5 1950.9,494.2 1951,491.9 1951,489.4 1951.1,486.9 1951.2,484.3 1951.3,481.7 1951.4,479 1951.5,476.2 1951.5,473.5 1951.6,470.7 1951.7,467.9 1951.8,465.1 1951.9,462.2 1952,459.4 1952,456.7 1952.1,453.9 1952.2,451.2 1952.3,448.5 1952.4,446 1952.5,443.4 1952.5,441 1952.6,438.7 1952.7,436.4 1952.8,434.3 1952.9,432.3 1953,430.4 1953,428.7 1953.1,427.1 1953.2,425.7 1953.3,424.5 1953.4,423.4 1953.5,422.5 1953.5,421.8 1953.6,421.2 1953.7,420.9 1953.8,420.7 1953.9,420.8 1954,421 1954,421.5 1954.1,422.1 1954.2,423 1954.3,424 1954.4,425.2 1954.5,426.6 1954.5,428.2 1954.6,429.9 1954.7,431.8 1954.8,433.9 1954.9,436.1 1955,438.4 1955,440.9 1955.1,443.5 1955.2,446.2 1955.3,449 1955.4,451.9 1955.5,454.8 1955.5,457.8 1955.6,460.9 1955.7,464 1955.8,467.1 1955.9,470.3 1956,473.4 1956,476.5 1956.1,479.6 1956.2,482.7 1956.3,485.7 1956.4,488.7 1956.5,491.6 1956.5,494.4 1956.6,497.2 1956.7,499.8 1956.8,502.4 1956.9,504.8 1957,507.1 1957,509.3 1957.1,511.3 1957.2,513.2 1957.3,515 1957.4,516.6 1957.4,518 1957.5,519.2 1957.6,520.3 1957.7,521.1 1957.8,521.8 1957.9,522.3 1957.9,522.6 1958,522.7 1958.1,522.6 1958.2,522.2 1958.3,521.7 1958.4,520.9 1958.4,520 1958.5,518.8 1958.6,517.4 1958.7,515.9 1958.8,514.1 1958.9,512.1 1958.9,509.9 1959,507.6 1959.1,505 1959.2,502.3 1959.3,499.4 1959.4,496.4 1959.4,493.2 1959.5,489.9 1959.6,486.5 1959.7,483 1959.8,479.4 1959.9,475.7 1959.9,472 1960,468.2 1960.1,464.5 1960.2,460.8 1960.3,457.1 1960.4,453.5 1960.4,449.9 1960.5,446.5 1960.6,443.2 1960.7,440 1960.8,437.1 1960.9,434.3 1960.9,431.7 1961,429.4 1961.1,427.3 1961.2,425.6 1961.3,424.1 1961.4,422.9 1961.4,422.1 1961.5,421.6 1961.6,421.4 1961.7,421.6 1961.8,422.2 1961.9,423.1 1961.9,424.3 1962,426 1962.1,427.9 1962.2,430.2 1962.3,432.8 1962.4,435.8 1962.4,439 1962.5,442.5 1962.6,446.2 1962.7,450.1 1962.8,454.2 1962.9,458.5 1962.9,462.9 1963,467.4 1963.1,472 1963.2,476.6 1963.3,481.2 1963.4,485.7 1963.4,490.2 1963.5,494.5 1963.6,498.7 1963.7,502.7 1963.8,506.4 1963.9,510 1963.9,513.2 1964,516.2 1964.1,518.8 1964.2,521.1 1964.3,523 1964.4,524.5 1964.4,525.7 1964.5,526.4 1964.6,526.7" fill="none" stroke="#2a8ce0" stroke-width="1.35" stroke-linejoin="round" clip-path="url(#c4)" />
<polyline points="1906.4,521.4 1906.5,521.5 1906.6,521.5 1906.6,521.6 1906.7,521.7 1906.8,521.8 1906.9,521.9 1907,522 1907.1,522.1 1907.1,522.2 1907.2,522.3 1907.3,522.4 1907.4,522.5 1907.5,522.6 1907.6,522.7 1907.6,522.9 1907.7,523 1907.8,523.1 1907.9,523.2 1908,523.3 1908.1,523.4 1908.1,523.5 1908.2,523.6 1908.3,523.7 1908.4,523.8 1908.5,523.9 1908.6,524 1908.6,524 1908.7,524.1 1908.8,524.1 1908.9,524.2 1909,524.2 1909.1,524.2 1909.1,524.2 1909.2,524.2 1909.3,524.2 1909.4,524.1 1909.5,524 1909.6,523.9 1909.6,523.8 1909.7,523.7 1909.8,523.5 1909.9,523.3 1910,523.1 1910.1,522.9 1910.1,522.6 1910.2,522.3 1910.3,522 1910.4,521.7 1910.5,521.3 1910.6,520.9 1910.6,520.5 1910.7,520 1910.8,519.5 1910.9,519 1911,518.4 1911.1,517.8 1911.1,517.2 1911.2,516.6 1911.3,515.9 1911.4,515.2 1911.5,514.4 1911.6,513.7 1911.6,512.9 1911.7,512.1 1911.8,511.2 1911.9,510.3 1912,509.4 1912.1,508.5 1912.1,507.6 1912.2,506.6 1912.3,505.6 1912.4,504.6 1912.5,503.6 1912.6,502.5 1912.6,501.5 1912.7,500.4 1912.8,499.3 1912.9,498.2 1913,497.1 1913.1,496 1913.1,494.8 1913.2,493.7 1913.3,492.5 1913.4,491.4 1913.5,490.2 1913.6,489.1 1913.6,487.9 1913.7,486.7 1913.8,485.6 1913.9,484.4 1914,483.2 1914,482.1 1914.1,480.9 1914.2,479.7 1914.3,478.6 1914.4,477.4 1914.5,476.3 1914.5,475.2 1914.6,474 1914.7,472.9 1914.8,471.8 1914.9,470.6 1915,469.5 1915,468.4 1915.1,467.3 1915.2,466.2 1915.3,465.1 1915.4,464.1 1915.5,463 1915.5,461.9 1915.6,460.8 1915.7,459.8 1915.8,458.7 1915.9,457.6 1916,456.6 1916,455.5 1916.1,454.5 1916.2,453.5 1916.3,452.4 1916.4,451.4 1916.5,450.3 1916.5,449.3 1916.6,448.3 1916.7,447.3 1916.8,446.2 1916.9,445.2 1917,444.2 1917,443.2 1917.1,442.2 1917.2,441.2 1917.3,440.3 1917.4,439.3 1917.5,438.3 1917.5,437.4 1917.6,436.4 1917.7,435.5 1917.8,434.6 1917.9,433.7 1918,432.8 1918,432 1918.1,431.1 1918.2,430.3 1918.3,429.5 1918.4,428.7 1918.5,428 1918.5,427.3 1918.6,426.6 1918.7,426 1918.8,425.3 1918.9,424.8 1919,424.2 1919,423.7 1919.1,423.3 1919.2,422.9 1919.3,422.5 1919.4,422.2 1919.5,421.9 1919.5,421.7 1919.6,421.6 1919.7,421.5 1919.8,421.4 1919.9,421.4 1920,421.5 1920,421.6 1920.1,421.7 1920.2,422 1920.3,422.2 1920.4,422.6 1920.5,423 1920.5,423.5 1920.6,424 1920.7,424.6 1920.8,425.2 1920.9,425.9 1921,426.6 1921,427.4 1921.1,428.3 1921.2,429.2 1921.3,430.2 1921.4,431.2 1921.4,432.2 1921.5,433.3 1921.6,434.5 1921.7,435.7 1921.8,436.9 1921.9,438.2 1921.9,439.5 1922,440.8 1922.1,442.1 1922.2,443.5 1922.3,445 1922.4,446.4 1922.4,447.9 1922.5,449.3 1922.6,450.8 1922.7,452.4 1922.8,453.9 1922.9,455.4 1922.9,457 1923,458.5 1923.1,460.1 1923.2,461.6 1923.3,463.2 1923.4,464.8 1923.4,466.3 1923.5,467.9 1923.6,469.5 1923.7,471 1923.8,472.6 1923.9,474.1 1923.9,475.7 1924,477.2 1924.1,478.7 1924.2,480.2 1924.3,481.8 1924.4,483.3 1924.4,484.7 1924.5,486.2 1924.6,487.7 1924.7,489.1 1924.8,490.6 1924.9,492 1924.9,493.4 1925,494.8 1925.1,496.2 1925.2,497.6 1925.3,498.9 1925.4,500.3 1925.4,501.6 1925.5,502.9 1925.6,504.2 1925.7,505.5 1925.8,506.8 1925.9,508 1925.9,509.2 1926,510.4 1926.1,511.6 1926.2,512.8 1926.3,513.9 1926.4,515 1926.4,516 1926.5,517.1 1926.6,518.1 1926.7,519.1 1926.8,520 1926.9,520.9 1926.9,521.7 1927,522.6 1927.1,523.3 1927.2,524 1927.3,524.7 1927.4,525.3 1927.4,525.9 1927.5,526.4 1927.6,526.9 1927.7,527.2 1927.8,527.6 1927.9,527.8 1927.9,528 1928,528.1 1928.1,528.2 1928.2,528.2 1928.3,528.1 1928.3,527.9 1928.4,527.7 1928.5,527.4 1928.6,527 1928.7,526.5 1928.8,526 1928.8,525.4 1928.9,524.7 1929,523.9 1929.1,523.1 1929.2,522.2 1929.3,521.2 1929.3,520.1 1929.4,519 1929.5,517.8 1929.6,516.5 1929.7,515.2 1929.8,513.8 1929.8,512.4 1929.9,510.9 1930,509.3 1930.1,507.7 1930.2,506 1930.3,504.3 1930.3,502.6 1930.4,500.8 1930.5,499 1930.6,497.2 1930.7,495.3 1930.8,493.4 1930.8,491.5 1930.9,489.6 1931,487.7 1931.1,485.7 1931.2,483.8 1931.3,481.9 1931.3,479.9 1931.4,478 1931.5,476.1 1931.6,474.2 1931.7,472.3 1931.8,470.4 1931.8,468.5 1931.9,466.7 1932,464.9 1932.1,463.1 1932.2,461.4 1932.3,459.6 1932.3,457.9 1932.4,456.3 1932.5,454.7 1932.6,453.1 1932.7,451.6 1932.8,450.1 1932.8,448.6 1932.9,447.2 1933,445.8 1933.1,444.5 1933.2,443.2 1933.3,442 1933.3,440.8 1933.4,439.7 1933.5,438.6 1933.6,437.5 1933.7,436.5 1933.8,435.6 1933.8,434.6 1933.9,433.8 1934,433 1934.1,432.2 1934.2,431.5 1934.3,430.9 1934.3,430.3 1934.4,429.7 1934.5,429.3 1934.6,428.8 1934.7,428.4 1934.8,428.1 1934.8,427.9 1934.9,427.7 1935,427.6 1935.1,427.5 1935.2,427.5 1935.3,427.6 1935.3,427.7 1935.4,427.9 1935.5,428.2 1935.6,428.5 1935.7,428.9 1935.7,429.4 1935.8,430 1935.9,430.6 1936,431.4 1936.1,432.2 1936.2,433 1936.2,434 1936.3,435 1936.4,436.2 1936.5,437.3 1936.6,438.6 1936.7,440 1936.7,441.4 1936.8,442.9 1936.9,444.4 1937,446.1 1937.1,447.8 1937.2,449.5 1937.2,451.3 1937.3,453.2 1937.4,455.2 1937.5,457.2 1937.6,459.2 1937.7,461.3 1937.7,463.4 1937.8,465.6 1937.9,467.8 1938,470 1938.1,472.2 1938.2,474.5 1938.2,476.7 1938.3,479 1938.4,481.3 1938.5,483.5 1938.6,485.8 1938.7,488 1938.7,490.2 1938.8,492.4 1938.9,494.5 1939,496.6 1939.1,498.7 1939.2,500.7 1939.2,502.7 1939.3,504.6 1939.4,506.4 1939.5,508.2 1939.6,509.9 1939.7,511.5 1939.7,513 1939.8,514.5 1939.9,515.9 1940,517.2 1940.1,518.4 1940.2,519.5 1940.2,520.5 1940.3,521.4 1940.4,522.3 1940.5,523 1940.6,523.6 1940.7,524.2 1940.7,524.6 1940.8,525 1940.9,525.2 1941,525.4 1941.1,525.5 1941.2,525.5 1941.2,525.4 1941.3,525.2 1941.4,524.9 1941.5,524.5 1941.6,524 1941.7,523.5 1941.7,522.9 1941.8,522.2 1941.9,521.4 1942,520.5 1942.1,519.6 1942.2,518.6 1942.2,517.5 1942.3,516.4 1942.4,515.2 1942.5,513.9 1942.6,512.6 1942.7,511.2 1942.7,509.8 1942.8,508.3 1942.9,506.7 1943,505.1 1943.1,503.4 1943.1,501.7 1943.2,500 1943.3,498.2 1943.4,496.3 1943.5,494.5 1943.6,492.5 1943.6,490.6 1943.7,488.6 1943.8,486.5 1943.9,484.5 1944,482.4 1944.1,480.2 1944.1,478.1 1944.2,475.9 1944.3,473.7 1944.4,471.5 1944.5,469.3 1944.6,467.1 1944.6,464.9 1944.7,462.7 1944.8,460.4 1944.9,458.2 1945,456 1945.1,453.9 1945.1,451.7 1945.2,449.6 1945.3,447.5 1945.4,445.4 1945.5,443.4 1945.6,441.5 1945.6,439.6 1945.7,437.7 1945.8,436 1945.9,434.3 1946,432.7 1946.1,431.1 1946.1,429.7 1946.2,428.3 1946.3,427.1 1946.4,425.9 1946.5,424.9 1946.6,423.9 1946.6,423.1 1946.7,422.4 1946.8,421.9 1946.9,421.4 1947,421.1 1947.1,420.9 1947.1,420.8 1947.2,420.9 1947.3,421.1 1947.4,421.5 1947.5,421.9 1947.6,422.5 1947.6,423.3 1947.7,424.1 1947.8,425.1 1947.9,426.2 1948,427.5 1948.1,428.8 1948.1,430.3 1948.2,431.9 1948.3,433.5 1948.4,435.3 1948.5,437.2 1948.6,439.1 1948.6,441.2 1948.7,443.3 1948.8,445.5 1948.9,447.8 1949,450.1 1949.1,452.5 1949.1,454.9 1949.2,457.4 1949.3,459.9 1949.4,462.5 1949.5,465 1949.6,467.6 1949.6,470.2 1949.7,472.7 1949.8,475.3 1949.9,477.9 1950,480.4 1950.1,482.9 1950.1,485.4 1950.2,487.8 1950.3,490.2 1950.4,492.5 1950.5,494.8 1950.5,497 1950.6,499.2 1950.7,501.3 1950.8,503.3 1950.9,505.2 1951,507.1 1951,508.9 1951.1,510.5 1951.2,512.1 1951.3,513.6 1951.4,515 1951.5,516.3 1951.5,517.4 1951.6,518.5 1951.7,519.4 1951.8,520.3 1951.9,521 1952,521.6 1952,522.1 1952.1,522.4 1952.2,522.6 1952.3,522.7 1952.4,522.7 1952.5,522.5 1952.5,522.2 1952.6,521.8 1952.7,521.2 1952.8,520.5 1952.9,519.7 1953,518.7 1953,517.6 1953.1,516.3 1953.2,514.9 1953.3,513.4 1953.4,511.8 1953.5,510 1953.5,508 1953.6,506 1953.7,503.8 1953.8,501.5 1953.9,499.2 1954,496.7 1954,494.1 1954.1,491.4 1954.2,488.6 1954.3,485.7 1954.4,482.8 1954.5,479.8 1954.5,476.8 1954.6,473.7 1954.7,470.6 1954.8,467.5 1954.9,464.3 1955,461.2 1955,458.1 1955.1,455.1 1955.2,452.1 1955.3,449.1 1955.4,446.3 1955.5,443.5 1955.5,440.8 1955.6,438.3 1955.7,435.8 1955.8,433.6 1955.9,431.4 1956,429.5 1956,427.7 1956.1,426.1 1956.2,424.6 1956.3,423.4 1956.4,422.5 1956.5,421.7 1956.5,421.1 1956.6,420.8 1956.7,420.7 1956.8,420.9 1956.9,421.2 1957,421.9 1957,422.7 1957.1,423.8 1957.2,425.1 1957.3,426.7 1957.4,428.4 1957.4,430.4 1957.5,432.6 1957.6,435 1957.7,437.5 1957.8,440.3 1957.9,443.2 1957.9,446.2 1958,449.4 1958.1,452.6 1958.2,456 1958.3,459.5 1958.4,463 1958.4,466.5 1958.5,470.1 1958.6,473.7 1958.7,477.3 1958.8,480.9 1958.9,484.4 1958.9,487.9 1959,491.2 1959.1,494.5 1959.2,497.7 1959.3,500.7 1959.4,503.6 1959.4,506.4 1959.5,508.9 1959.6,511.3 1959.7,513.5 1959.8,515.5 1959.9,517.3 1959.9,518.8 1960,520.1 1960.1,521.2 1960.2,522 1960.3,522.6 1960.4,522.9 1960.4,523 1960.5,522.8 1960.6,522.3 1960.7,521.6 1960.8,520.6 1960.9,519.4 1960.9,517.9 1961,516.1 1961.1,514.2 1961.2,512 1961.3,509.5 1961.4,506.9 1961.4,504.1 1961.5,501 1961.6,497.8 1961.7,494.5 1961.8,491 1961.9,487.3 1961.9,483.6 1962,479.8 1962.1,475.9 1962.2,472 1962.3,468 1962.4,464.1 1962.4,460.2 1962.5,456.3 1962.6,452.6 1962.7,449 1962.8,445.5 1962.9,442.1 1962.9,439 1963,436.1 1963.1,433.4 1963.2,431 1963.3,428.9 1963.4,427.1 1963.4,425.6 1963.5,424.5 1963.6,423.7 1963.7,423.3 1963.8,423.4 1963.9,423.8 1963.9,424.6 1964,425.8 1964.1,427.4 1964.2,429.5 1964.3,431.9 1964.4,434.6 1964.4,437.7 1964.5,441.2 1964.6,444.9" fill="none" stroke="#f47a2a" stroke-width="1.35" stroke-linejoin="round" clip-path="url(#c4)" />
<polyline points="1906.4,436.5 1906.5,437.2 1906.6,437.8 1906.6,438.5 1906.7,439.2 1906.8,439.9 1906.9,440.6 1907,441.4 1907.1,442.1 1907.1,442.9 1907.2,443.6 1907.3,444.4 1907.4,445.2 1907.5,446 1907.6,446.8 1907.6,447.6 1907.7,448.4 1907.8,449.3 1907.9,450.1 1908,450.9 1908.1,451.7 1908.1,452.6 1908.2,453.4 1908.3,454.3 1908.4,455.1 1908.5,456 1908.6,456.8 1908.6,457.7 1908.7,458.5 1908.8,459.4 1908.9,460.2 1909,461.1 1909.1,461.9 1909.1,462.8 1909.2,463.6 1909.3,464.5 1909.4,465.3 1909.5,466.2 1909.6,467 1909.6,467.9 1909.7,468.7 1909.8,469.6 1909.9,470.5 1910,471.3 1910.1,472.2 1910.1,473.1 1910.2,473.9 1910.3,474.8 1910.4,475.7 1910.5,476.6 1910.6,477.5 1910.6,478.4 1910.7,479.3 1910.8,480.2 1910.9,481.2 1911,482.1 1911.1,483 1911.1,484 1911.2,484.9 1911.3,485.9 1911.4,486.9 1911.5,487.9 1911.6,488.9 1911.6,489.9 1911.7,490.9 1911.8,491.9 1911.9,492.9 1912,493.9 1912.1,495 1912.1,496 1912.2,497 1912.3,498.1 1912.4,499.1 1912.5,500.2 1912.6,501.2 1912.6,502.3 1912.7,503.3 1912.8,504.4 1912.9,505.4 1913,506.4 1913.1,507.5 1913.1,508.5 1913.2,509.5 1913.3,510.5 1913.4,511.5 1913.5,512.5 1913.6,513.4 1913.6,514.4 1913.7,515.3 1913.8,516.2 1913.9,517.1 1914,517.9 1914,518.8 1914.1,519.6 1914.2,520.4 1914.3,521.1 1914.4,521.8 1914.5,522.5 1914.5,523.2 1914.6,523.8 1914.7,524.4 1914.8,524.9 1914.9,525.4 1915,525.9 1915,526.3 1915.1,526.7 1915.2,527.1 1915.3,527.4 1915.4,527.7 1915.5,527.9 1915.5,528.1 1915.6,528.3 1915.7,528.4 1915.8,528.4 1915.9,528.5 1916,528.4 1916,528.4 1916.1,528.3 1916.2,528.2 1916.3,528 1916.4,527.8 1916.5,527.6 1916.5,527.3 1916.6,527 1916.7,526.6 1916.8,526.2 1916.9,525.8 1917,525.4 1917,524.9 1917.1,524.4 1917.2,523.8 1917.3,523.3 1917.4,522.7 1917.5,522.1 1917.5,521.4 1917.6,520.8 1917.7,520.1 1917.8,519.4 1917.9,518.6 1918,517.9 1918,517.1 1918.1,516.3 1918.2,515.5 1918.3,514.7 1918.4,513.9 1918.5,513 1918.5,512.1 1918.6,511.2 1918.7,510.3 1918.8,509.4 1918.9,508.4 1919,507.4 1919,506.5 1919.1,505.5 1919.2,504.4 1919.3,503.4 1919.4,502.3 1919.5,501.3 1919.5,500.2 1919.6,499.1 1919.7,497.9 1919.8,496.8 1919.9,495.6 1920,494.4 1920,493.2 1920.1,491.9 1920.2,490.7 1920.3,489.4 1920.4,488.1 1920.5,486.8 1920.5,485.4 1920.6,484 1920.7,482.6 1920.8,481.2 1920.9,479.8 1921,478.3 1921,476.9 1921.1,475.4 1921.2,473.9 1921.3,472.3 1921.4,470.8 1921.4,469.2 1921.5,467.7 1921.6,466.1 1921.7,464.5 1921.8,462.9 1921.9,461.4 1921.9,459.8 1922,458.2 1922.1,456.6 1922.2,455 1922.3,453.5 1922.4,451.9 1922.4,450.4 1922.5,448.8 1922.6,447.3 1922.7,445.9 1922.8,444.4 1922.9,443 1922.9,441.6 1923,440.2 1923.1,438.9 1923.2,437.6 1923.3,436.3 1923.4,435.1 1923.4,433.9 1923.5,432.8 1923.6,431.7 1923.7,430.7 1923.8,429.8 1923.9,428.9 1923.9,428 1924,427.2 1924.1,426.5 1924.2,425.8 1924.3,425.2 1924.4,424.7 1924.4,424.2 1924.5,423.8 1924.6,423.4 1924.7,423.2 1924.8,422.9 1924.9,422.8 1924.9,422.7 1925,422.7 1925.1,422.7 1925.2,422.8 1925.3,423 1925.4,423.2 1925.4,423.5 1925.5,423.9 1925.6,424.3 1925.7,424.7 1925.8,425.2 1925.9,425.8 1925.9,426.4 1926,427.1 1926.1,427.8 1926.2,428.6 1926.3,429.4 1926.4,430.3 1926.4,431.2 1926.5,432.1 1926.6,433.1 1926.7,434.1 1926.8,435.1 1926.9,436.2 1926.9,437.3 1927,438.5 1927.1,439.7 1927.2,440.9 1927.3,442.1 1927.4,443.4 1927.4,444.6 1927.5,446 1927.6,447.3 1927.7,448.7 1927.8,450 1927.9,451.5 1927.9,452.9 1928,454.3 1928.1,455.8 1928.2,457.3 1928.3,458.8 1928.3,460.4 1928.4,461.9 1928.5,463.5 1928.6,465.1 1928.7,466.7 1928.8,468.3 1928.8,469.9 1928.9,471.6 1929,473.3 1929.1,475 1929.2,476.7 1929.3,478.4 1929.3,480.1 1929.4,481.8 1929.5,483.6 1929.6,485.3 1929.7,487.1 1929.8,488.9 1929.8,490.6 1929.9,492.4 1930,494.1 1930.1,495.9 1930.2,497.6 1930.3,499.3 1930.3,501.1 1930.4,502.8 1930.5,504.4 1930.6,506.1 1930.7,507.7 1930.8,509.3 1930.8,510.9 1930.9,512.4 1931,513.9 1931.1,515.3 1931.2,516.7 1931.3,518.1 1931.3,519.4 1931.4,520.6 1931.5,521.8 1931.6,522.9 1931.7,523.9 1931.8,524.9 1931.8,525.8 1931.9,526.6 1932,527.4 1932.1,528.1 1932.2,528.6 1932.3,529.1 1932.3,529.6 1932.4,529.9 1932.5,530.1 1932.6,530.3 1932.7,530.3 1932.8,530.3 1932.8,530.2 1932.9,529.9 1933,529.6 1933.1,529.2 1933.2,528.7 1933.3,528.2 1933.3,527.5 1933.4,526.8 1933.5,525.9 1933.6,525 1933.7,524 1933.8,523 1933.8,521.8 1933.9,520.6 1934,519.3 1934.1,518 1934.2,516.6 1934.3,515.1 1934.3,513.6 1934.4,512.1 1934.5,510.4 1934.6,508.8 1934.7,507.1 1934.8,505.3 1934.8,503.6 1934.9,501.8 1935,499.9 1935.1,498.1 1935.2,496.2 1935.3,494.3 1935.3,492.4 1935.4,490.5 1935.5,488.5 1935.6,486.6 1935.7,484.6 1935.7,482.7 1935.8,480.8 1935.9,478.8 1936,476.9 1936.1,475 1936.2,473 1936.2,471.1 1936.3,469.2 1936.4,467.4 1936.5,465.5 1936.6,463.7 1936.7,461.8 1936.7,460 1936.8,458.3 1936.9,456.5 1937,454.8 1937.1,453.1 1937.2,451.4 1937.2,449.7 1937.3,448.1 1937.4,446.6 1937.5,445 1937.6,443.5 1937.7,442 1937.7,440.6 1937.8,439.2 1937.9,437.9 1938,436.6 1938.1,435.4 1938.2,434.2 1938.2,433 1938.3,432 1938.4,431 1938.5,430 1938.6,429.1 1938.7,428.3 1938.7,427.5 1938.8,426.9 1938.9,426.3 1939,425.8 1939.1,425.3 1939.2,425 1939.2,424.7 1939.3,424.5 1939.4,424.4 1939.5,424.4 1939.6,424.5 1939.7,424.7 1939.7,425 1939.8,425.4 1939.9,425.9 1940,426.5 1940.1,427.2 1940.2,428 1940.2,428.9 1940.3,429.9 1940.4,431 1940.5,432.2 1940.6,433.5 1940.7,434.8 1940.7,436.3 1940.8,437.9 1940.9,439.5 1941,441.3 1941.1,443.1 1941.2,445 1941.2,446.9 1941.3,448.9 1941.4,451 1941.5,453.2 1941.6,455.4 1941.7,457.6 1941.7,459.9 1941.8,462.2 1941.9,464.5 1942,466.9 1942.1,469.2 1942.2,471.6 1942.2,474 1942.3,476.4 1942.4,478.8 1942.5,481.1 1942.6,483.5 1942.7,485.8 1942.7,488 1942.8,490.3 1942.9,492.5 1943,494.6 1943.1,496.7 1943.1,498.8 1943.2,500.7 1943.3,502.7 1943.4,504.5 1943.5,506.3 1943.6,508 1943.6,509.6 1943.7,511.1 1943.8,512.6 1943.9,513.9 1944,515.2 1944.1,516.4 1944.1,517.5 1944.2,518.5 1944.3,519.4 1944.4,520.2 1944.5,520.9 1944.6,521.5 1944.6,522.1 1944.7,522.5 1944.8,522.9 1944.9,523.1 1945,523.3 1945.1,523.4 1945.1,523.4 1945.2,523.3 1945.3,523.1 1945.4,522.8 1945.5,522.4 1945.6,522 1945.6,521.5 1945.7,520.8 1945.8,520.1 1945.9,519.4 1946,518.5 1946.1,517.5 1946.1,516.5 1946.2,515.4 1946.3,514.2 1946.4,513 1946.5,511.7 1946.6,510.3 1946.6,508.8 1946.7,507.2 1946.8,505.6 1946.9,503.9 1947,502.2 1947.1,500.4 1947.1,498.5 1947.2,496.5 1947.3,494.5 1947.4,492.5 1947.5,490.4 1947.6,488.2 1947.6,486 1947.7,483.8 1947.8,481.5 1947.9,479.1 1948,476.8 1948.1,474.4 1948.1,472 1948.2,469.6 1948.3,467.2 1948.4,464.7 1948.5,462.3 1948.6,459.9 1948.6,457.5 1948.7,455.1 1948.8,452.7 1948.9,450.3 1949,448 1949.1,445.7 1949.1,443.5 1949.2,441.3 1949.3,439.3 1949.4,437.2 1949.5,435.3 1949.6,433.5 1949.6,431.7 1949.7,430.1 1949.8,428.6 1949.9,427.1 1950,425.9 1950.1,424.7 1950.1,423.7 1950.2,422.8 1950.3,422.1 1950.4,421.5 1950.5,421.1 1950.5,420.8 1950.6,420.7 1950.7,420.7 1950.8,420.9 1950.9,421.3 1951,421.8 1951,422.5 1951.1,423.4 1951.2,424.4 1951.3,425.6 1951.4,426.9 1951.5,428.3 1951.5,429.9 1951.6,431.6 1951.7,433.5 1951.8,435.5 1951.9,437.6 1952,439.8 1952,442.1 1952.1,444.5 1952.2,447 1952.3,449.6 1952.4,452.2 1952.5,454.9 1952.5,457.6 1952.6,460.4 1952.7,463.2 1952.8,466 1952.9,468.9 1953,471.7 1953,474.6 1953.1,477.4 1953.2,480.2 1953.3,483 1953.4,485.7 1953.5,488.4 1953.5,491.1 1953.6,493.7 1953.7,496.2 1953.8,498.6 1953.9,500.9 1954,503.2 1954,505.3 1954.1,507.4 1954.2,509.3 1954.3,511.2 1954.4,512.9 1954.5,514.5 1954.5,515.9 1954.6,517.3 1954.7,518.5 1954.8,519.5 1954.9,520.4 1955,521.2 1955,521.8 1955.1,522.3 1955.2,522.6 1955.3,522.7 1955.4,522.7 1955.5,522.5 1955.5,522.2 1955.6,521.7 1955.7,521 1955.8,520.2 1955.9,519.2 1956,518 1956,516.7 1956.1,515.2 1956.2,513.5 1956.3,511.7 1956.4,509.7 1956.5,507.6 1956.5,505.3 1956.6,502.9 1956.7,500.3 1956.8,497.6 1956.9,494.8 1957,491.8 1957,488.8 1957.1,485.7 1957.2,482.4 1957.3,479.1 1957.4,475.8 1957.4,472.4 1957.5,469 1957.6,465.5 1957.7,462.1 1957.8,458.7 1957.9,455.3 1957.9,452 1958,448.7 1958.1,445.6 1958.2,442.5 1958.3,439.6 1958.4,436.8 1958.4,434.2 1958.5,431.8 1958.6,429.6 1958.7,427.6 1958.8,425.8 1958.9,424.3 1958.9,423 1959,422 1959.1,421.3 1959.2,420.9 1959.3,420.7 1959.4,420.9 1959.4,421.3 1959.5,422.1 1959.6,423.1 1959.7,424.5 1959.8,426.1 1959.9,428 1959.9,430.2 1960,432.7 1960.1,435.4 1960.2,438.3 1960.3,441.4 1960.4,444.8 1960.4,448.3 1960.5,452 1960.6,455.8 1960.7,459.7 1960.8,463.7 1960.9,467.8 1960.9,471.9 1961,476 1961.1,480 1961.2,484.1 1961.3,488.1 1961.4,491.9 1961.4,495.7 1961.5,499.3 1961.6,502.7 1961.7,506 1961.8,509 1961.9,511.8 1961.9,514.4 1962,516.6 1962.1,518.7 1962.2,520.4 1962.3,521.8 1962.4,522.9 1962.4,523.7 1962.5,524.2 1962.6,524.3 1962.7,524.1 1962.8,523.6 1962.9,522.8 1962.9,521.6 1963,520.2 1963.1,518.4 1963.2,516.4 1963.3,514.1 1963.4,511.5 1963.4,508.6 1963.5,505.6 1963.6,502.3 1963.7,498.8 1963.8,495.2 1963.9,491.4 1963.9,487.5 1964,483.5 1964.1,479.4 1964.2,475.2 1964.3,471.1 1964.4,467 1964.4,462.9 1964.5,458.9 1964.6,455" fill="none" stroke="#e9d65c" stroke-width="1.35" stroke-linejoin="round" clip-path="url(#c4)" />
<path d="M1964.6 376.4L1965.6 382.3L1966.6 377.6L1967.6 384.1L1968.5 377.2L1969.5 383.9L1970.5 372.2L1971.5 379.7L1972.5 378.6L1973.5 381.4L1974.5 378.3L1975.5 376.5L1976.5 375.3L1977.4 377.7L1978.4 375.8L1979.4 380.7L1980.4 372.1L1981.4 377.5L1982.4 374L1983.4 383.8L1984.3 377.4L1985.3 377L1986.3 377.6L1987.3 376.8L1988.3 376.3L1989.3 376.7L1990.3 372L1991.3 383.4L1992.2 373.5L1993.2 377.5L1994.2 378.9L1995.2 383.4L1996.2 374L1997.2 384.2L1996.2 570.8L1995.2 565.7L1994.2 572.8L1993.2 563.7L1992.2 569.9L1991.3 563.5L1990.3 568.6L1989.3 568.7L1988.3 571.8L1987.3 569.7L1986.3 573.1L1985.3 570.5L1984.3 572.2L1983.4 566.3L1982.4 574L1981.4 565.7L1980.4 572L1979.4 568.6L1978.4 569.1L1977.4 567.3L1976.5 572.1L1975.5 567.2L1974.5 569.8L1973.5 570.6L1972.5 568.1L1971.5 570.8L1970.5 569.5L1969.5 564.4L1968.5 573.9L1967.6 564.9L1966.6 571.8L1965.6 566.5L1964.6 573.9L1963.6 570.6Z" fill="#f47a2a" clip-path="url(#c4)"/>
<path d="M1964.8 394.4V424.5M1965.5 576.5V526.5M1966.2 379.7V424.5M1966.9 575.9V526.5M1968.6 390.2V424.5M1969.3 562.7V526.5M1970.4 379.2V424.5M1971.1 557V526.5M1972.5 378.7V424.5M1973.2 574.3V526.5M1973.7 374.9V424.5M1974.4 556.6V526.5M1975.3 383.4V424.5M1976 575.6V526.5M1977 375.4V424.5M1977.7 567.1V526.5M1978.5 390.9V424.5M1979.2 558.6V526.5M1979.8 395.2V424.5M1980.5 570.4V526.5M1982.2 394.9V424.5M1982.9 555.7V526.5M1984.6 385.4V424.5M1985.3 563.9V526.5M1986.1 383.9V424.5M1986.8 573.5V526.5M1987.8 388.2V424.5M1988.5 555.8V526.5M1990.1 398.2V424.5M1990.8 565.9V526.5M1992.3 395.7V424.5M1993 571.3V526.5M1994.7 382.9V424.5M1995.4 572.6V526.5" stroke="#f47a2a" stroke-width="1.3" fill="none"/>
<path d="M1983 380L1988 378L1992 382L1996.2 380L1996.2 478L1992 474L1988 452L1985 420L1982.5 396Z" fill="#2a8ce0"/>
<path d="M1964.6 486L1966.5 490L1968 530L1969 574L1964.6 574Z" fill="#2a8ce0"/>
<path d="M1971 382L1974.5 384L1976 470L1973 480L1971.5 440Z" fill="#2a8ce0"/>
<path d="M1976 490L1978.5 486L1980.5 560L1979 574L1976.5 540Z" fill="#2a8ce0"/>
<path d="M1966 384.7v8M1967.5 561.9v-8M1972 378.4v8M1973.5 564.2v-8M1978 384.4v8M1979.5 574.9v-8M1985 378.3v8M1986.5 574.6v-8M1990 384.4v8M1991.5 567.1v-8M1995 380.2v8M1996.5 567v-8" stroke="#e9d65c" stroke-width="1.3" fill="none"/>
<path d="M1987 385.1v14M1989.5 383.7v14M1992 386.9v14M1994.5 384v14M1968 376.2v14M1971 376.6v14M1966 570.2v-14M1969 568.6v-14M1975 566.5v-14M1981 563.3v-14" stroke="#2a8ce0" stroke-width="1.4" fill="none"/>
<rect x="1042" y="635" width="667" height="263" fill="#000"/>
<path d="M1087.5 635V897M1144.5 635V897M1202.5 635V897M1259.5 635V897M1316.5 635V897M1373.5 635V897M1430.5 635V897M1487.5 635V897M1544.5 635V897M1601.5 635V897M1658.5 635V897M1042 860.5H1708M1042 809.5H1708M1042 759.5H1708M1042 709.5H1708M1042 659.5H1708" stroke="#474747" stroke-width="1" fill="none"/>
<path d="M1087.5 636v6M1087.5 897v-6M1144.5 636v6M1144.5 897v-6M1202.5 636v6M1202.5 897v-6M1259.5 636v6M1259.5 897v-6M1316.5 636v6M1316.5 897v-6M1373.5 636v6M1373.5 897v-6M1430.5 636v6M1430.5 897v-6M1487.5 636v6M1487.5 897v-6M1544.5 636v6M1544.5 897v-6M1601.5 636v6M1601.5 897v-6M1658.5 636v6M1658.5 897v-6M1043 860.5h6M1708 860.5h-6M1043 809.5h6M1708 809.5h-6M1043 759.5h6M1708 759.5h-6M1043 709.5h6M1708 709.5h-6M1043 659.5h6M1708 659.5h-6" stroke="#b4b4b4" stroke-width="1" fill="none"/>
<rect x="1042.5" y="635.5" width="666" height="262" fill="none" stroke="#b4b4b4" stroke-width="1"/>
<text x="1039.5" y="866.7" text-anchor="end" font-family="Liberation Sans" font-size="13" fill="#bbbbbb">-20</text>
<text x="1039.5" y="815.7" text-anchor="end" font-family="Liberation Sans" font-size="13" fill="#bbbbbb">-10</text>
<text x="1039.5" y="765.7" text-anchor="end" font-family="Liberation Sans" font-size="13" fill="#bbbbbb">0</text>
<text x="1039.5" y="715.7" text-anchor="end" font-family="Liberation Sans" font-size="13" fill="#bbbbbb">10</text>
<text x="1039.5" y="665.7" text-anchor="end" font-family="Liberation Sans" font-size="13" fill="#bbbbbb">20</text>
<polyline points="1202.5,759.5 1290,759.5" fill="none" stroke="#e9d65c" stroke-width="1.6" stroke-linejoin="round" clip-path="url(#c5)" />
<polyline points="1202.5,759.5 1202.5,759.5 1202.8,759.4 1203,757.7 1203.2,754.6 1203.5,750.2 1203.8,745 1204,742 1204.2,739.1 1204.5,736.5 1204.8,734.2 1205,732.2 1205.2,730.6 1205.5,729.3 1205.8,728.3 1206,727.7 1206.2,727.5 1206.5,727.6 1206.8,728.1 1207,728.9 1207.2,730 1207.5,731.4 1207.8,733.1 1208,735 1208.2,737.1 1208.5,739.4 1208.8,741.8 1209,744.4 1209.2,747 1209.5,749.6 1209.8,752.2 1210,754.8 1210.2,757.3 1210.5,759.7 1210.8,762 1211,764.1 1211.2,766 1211.5,767.7 1211.8,769.1 1212,770.3 1212.2,771.3 1212.5,772 1212.8,772.5 1213,772.6 1213.2,772.5 1213.5,772.2 1213.8,771.6 1214,770.8 1214.2,769.8 1214.5,768.5 1214.8,767.1 1215,765.6 1215.2,763.9 1215.5,762.1 1215.8,760.2 1216,758.3 1216.2,756.4 1216.5,754.4 1216.8,752.5 1217,750.7 1217.2,748.9 1217.5,747.3 1217.8,745.7 1218,744.3 1218.2,743.1 1218.5,742 1218.8,741.1 1219,740.4 1219.2,739.9 1219.5,739.5 1219.8,739.4 1220,739.5 1220.2,739.7 1220.5,740.2 1220.8,740.8 1221,741.5 1221.2,742.4 1221.5,743.5 1221.8,744.6 1222,745.9 1222.2,747.2 1222.5,748.5 1222.8,749.9 1223,751.4 1223.2,752.8 1223.5,754.2 1223.8,755.6 1224,756.9 1224.2,758.1 1224.5,759.2 1224.8,760.2 1225,761.2 1225.2,762 1225.5,762.6 1225.8,763.1 1226,763.5 1226.2,763.8 1226.5,763.9 1226.8,763.8 1227,763.6 1227.2,763.3 1227.5,762.9 1227.8,762.3 1228,761.6 1228.2,760.9 1228.5,760 1228.8,759.1 1229,758.1 1229.2,757.1 1229.5,756.1 1229.8,755 1230,754 1230.2,753 1230.5,752 1230.8,751 1231,750.1 1231.2,749.3 1231.5,748.5 1231.8,747.8 1232,747.3 1232.2,746.8 1232.5,746.4 1232.8,746.1 1233,745.9 1233.2,745.9 1233.5,745.9 1233.8,746 1234,746.3 1234.2,746.6 1234.5,747 1234.8,747.5 1235,748.1 1235.2,748.7 1235.5,749.4 1235.8,750.1 1236,750.8 1236.2,751.6 1236.5,752.3 1236.8,753.1 1237,753.9 1237.2,754.6 1237.5,755.3 1237.8,756 1238,756.6 1238.2,757.1 1238.5,757.6 1238.8,758.1 1239,758.4 1239.2,758.7 1239.5,758.9 1239.8,759 1240,759.1 1240.2,759.1 1240.5,759 1240.8,758.8 1241,758.6 1241.2,758.3 1241.5,757.9 1241.8,757.5 1242,757 1242.2,756.5 1242.5,756 1242.8,755.5 1243,754.9 1243.2,754.3 1243.5,753.8 1243.8,753.2 1244,752.7 1244.2,752.1 1244.5,751.7 1244.8,751.2 1245,750.8 1245.2,750.4 1245.5,750.1 1245.8,749.9 1246,749.6 1246.2,749.5 1246.5,749.4 1246.8,749.4 1247,749.4 1247.2,749.5 1247.5,749.6 1247.8,749.8 1248,750 1248.2,750.2 1248.5,750.5 1248.8,750.9 1249,751.3 1249.2,751.6 1249.5,752 1249.8,752.5 1250,752.9 1250.2,753.3 1250.5,753.7 1250.8,754.1 1251,754.5 1251.2,754.8 1251.5,755.2 1251.8,755.5 1252,755.7 1252.2,756 1252.5,756.2 1252.8,756.3 1253,756.4 1253.2,756.5 1253.5,756.5 1253.8,756.5 1254,756.5 1254.2,756.4 1254.5,756.2 1254.8,756.1 1255,755.9 1255.2,755.6 1255.5,755.4 1255.8,755.1 1256,754.9 1256.2,754.6 1256.5,754.3 1256.8,753.9 1257,753.6 1257.2,753.3 1257.5,753 1257.8,752.8 1258,752.5 1258.2,752.3 1258.5,752 1258.8,751.8 1259,751.7 1259.2,751.5 1259.5,751.4 1259.6,753.5 1259.8,659.3 1260.1,872.2 1260.8,854.7 1261.5,829.6 1262.3,804.6 1262.3,803.6 1262.8,753.5 1263.2,802.1 1263.8,803.1 1264.5,787 1265,750 1265.5,785.5 1266,786.5 1266.8,778.2 1267.2,747.7 1267.7,776.7 1268.3,777.7 1269,773.6 1269.5,746 1270,772.1 1270.5,773.1 1271.3,771.2 1271.8,744.9 1272.2,769.7 1272.8,770.7 1273.5,769.9 1274,744.2 1274.5,768.4 1275,769.4 1275.8,769.3 1276.2,743.6 1276.7,767.8 1277.3,768.8 1278,768.9 1278.5,743.3 1279,767.4 1279.5,768.4 1280.3,768.7 1280.8,743 1281.2,767.2 1281.8,768.2 1282.5,768.6 1283,742.8 1283.5,767.1 1284,768.1 1284.8,768.6 1285.2,742.7 1285.7,767.1 1286.3,768.1 1287,768.5 1287.5,742.6 1288,767 1288.5,768 1289.3,768.5 1289.8,742.6 1290.2,767 1290.8,768" fill="none" stroke="#2a8ce0" stroke-width="1.3" stroke-linejoin="round" clip-path="url(#c5)" />
<polyline points="1259.9,659.3 1259.9,864.7" fill="none" stroke="#2a8ce0" stroke-width="1.9" stroke-linejoin="round" clip-path="url(#c5)" />
<rect x="1595.5" y="646.5" width="100" height="38.8" fill="#000" stroke="#e6e6e6" stroke-width="1"/>
<path d="M1600 664H1612V654H1625" fill="none" stroke="#e9d65c" stroke-width="1.2"/>
<text x="1654.6" y="663.5" font-family="Liberation Sans" font-size="13" fill="#ececec">idrRef</text>
<path d="M1600 681.9H1612V671.9H1625" fill="none" stroke="#2a8ce0" stroke-width="1.2"/>
<text x="1654.6" y="681.4" font-family="Liberation Sans" font-size="13" fill="#ececec">idr</text>
<rect x="1042" y="924" width="667" height="253" fill="#000"/>
<path d="M1087.5 924V1176M1144.5 924V1176M1202.5 924V1176M1259.5 924V1176M1316.5 924V1176M1373.5 924V1176M1430.5 924V1176M1487.5 924V1176M1544.5 924V1176M1601.5 924V1176M1658.5 924V1176M1042 1050.5H1708" stroke="#474747" stroke-width="1" fill="none"/>
<path d="M1087.5 925v6M1087.5 1176v-6M1144.5 925v6M1144.5 1176v-6M1202.5 925v6M1202.5 1176v-6M1259.5 925v6M1259.5 1176v-6M1316.5 925v6M1316.5 1176v-6M1373.5 925v6M1373.5 1176v-6M1430.5 925v6M1430.5 1176v-6M1487.5 925v6M1487.5 1176v-6M1544.5 925v6M1544.5 1176v-6M1601.5 925v6M1601.5 1176v-6M1658.5 925v6M1658.5 1176v-6M1043 1050.5h6M1708 1050.5h-6" stroke="#b4b4b4" stroke-width="1" fill="none"/>
<rect x="1042.5" y="924.5" width="666" height="252" fill="none" stroke="#b4b4b4" stroke-width="1"/>
<text x="1039.5" y="1056.7" text-anchor="end" font-family="Liberation Sans" font-size="13" fill="#bbbbbb">0</text>
<text x="1039.5" y="930.7" text-anchor="end" font-family="Liberation Sans" font-size="13" fill="#bbbbbb">50</text>
<text x="1039.5" y="1182.7" text-anchor="end" font-family="Liberation Sans" font-size="13" fill="#bbbbbb">-50</text>
<text x="1087.5" y="1194" text-anchor="middle" font-family="Liberation Sans" font-size="13" fill="#bbbbbb">-0.4</text>
<text x="1144.5" y="1194" text-anchor="middle" font-family="Liberation Sans" font-size="13" fill="#bbbbbb">-0.2</text>
<text x="1202.5" y="1194" text-anchor="middle" font-family="Liberation Sans" font-size="13" fill="#bbbbbb">0</text>
<text x="1259.5" y="1194" text-anchor="middle" font-family="Liberation Sans" font-size="13" fill="#bbbbbb">0.2</text>
<text x="1316.5" y="1194" text-anchor="middle" font-family="Liberation Sans" font-size="13" fill="#bbbbbb">0.4</text>
<text x="1373.5" y="1194" text-anchor="middle" font-family="Liberation Sans" font-size="13" fill="#bbbbbb">0.6</text>
<text x="1430.5" y="1194" text-anchor="middle" font-family="Liberation Sans" font-size="13" fill="#bbbbbb">0.8</text>
<text x="1487.5" y="1194" text-anchor="middle" font-family="Liberation Sans" font-size="13" fill="#bbbbbb">1</text>
<text x="1544.5" y="1194" text-anchor="middle" font-family="Liberation Sans" font-size="13" fill="#bbbbbb">1.2</text>
<text x="1601.5" y="1194" text-anchor="middle" font-family="Liberation Sans" font-size="13" fill="#bbbbbb">1.4</text>
<text x="1658.5" y="1194" text-anchor="middle" font-family="Liberation Sans" font-size="13" fill="#bbbbbb">1.6</text>
<polyline points="1202.5,1050.5 1202.5,1000.3 1259.4,1000.3" fill="none" stroke="#e9d65c" stroke-width="1.6" stroke-linejoin="round" clip-path="url(#c7)" />
<polyline points="1202.4,1050.5 1202.6,1015.4 1202.6,1015.4 1202.8,1014.7 1203.1,1013.7 1203.3,1012.3 1203.6,1010.4 1203.8,1008 1204.1,1005.1 1204.3,1003.6 1204.6,1002.2 1204.8,1000.7 1205.1,999.2 1205.3,997.7 1205.6,996.3 1205.8,995 1206.1,993.7 1206.3,992.6 1206.6,991.5 1206.8,990.6 1207.1,989.8 1207.3,989.1 1207.6,988.6 1207.8,988.2 1208.1,988 1208.3,987.9 1208.6,988 1208.8,988.3 1209.1,988.7 1209.3,989.2 1209.6,989.9 1209.8,990.6 1210.1,991.5 1210.3,992.5 1210.6,993.6 1210.8,994.7 1211.1,995.9 1211.3,997.2 1211.6,998.5 1211.8,999.7 1212.1,1001 1212.3,1002.3 1212.6,1003.5 1212.8,1004.6 1213.1,1005.7 1213.3,1006.7 1213.6,1007.6 1213.8,1008.5 1214.1,1009.2 1214.3,1009.8 1214.6,1010.2 1214.8,1010.6 1215.1,1010.8 1215.3,1010.9 1215.6,1010.8 1215.8,1010.6 1216.1,1010.3 1216.3,1009.9 1216.6,1009.4 1216.8,1008.7 1217.1,1008 1217.3,1007.1 1217.6,1006.2 1217.8,1005.3 1218.1,1004.2 1218.3,1003.2 1218.6,1002.1 1218.8,1001 1219.1,999.9 1219.3,998.8 1219.6,997.8 1219.8,996.8 1220.1,995.9 1220.3,995 1220.6,994.2 1220.8,993.5 1221.1,992.8 1221.3,992.3 1221.6,991.9 1221.8,991.6 1222.1,991.4 1222.3,991.3 1222.6,991.3 1222.8,991.4 1223.1,991.7 1223.3,992 1223.6,992.5 1223.8,993 1224.1,993.6 1224.3,994.3 1224.6,995.1 1224.8,995.9 1225.1,996.8 1225.3,997.7 1225.6,998.6 1225.8,999.5 1226.1,1000.4 1226.3,1001.4 1226.6,1002.3 1226.8,1003.1 1227.1,1003.9 1227.3,1004.7 1227.6,1005.4 1227.8,1006 1228.1,1006.6 1228.3,1007.1 1228.6,1007.4 1228.8,1007.7 1229.1,1007.9 1229.3,1008 1229.6,1008 1229.8,1007.9 1230.1,1007.7 1230.3,1007.5 1230.6,1007.1 1230.8,1006.6 1231.1,1006.1 1231.3,1005.5 1231.6,1004.9 1231.8,1004.2 1232.1,1003.5 1232.3,1002.7 1232.6,1001.9 1232.8,1001.1 1233.1,1000.3 1233.3,999.5 1233.6,998.8 1233.8,998 1234.1,997.3 1234.3,996.7 1234.6,996 1234.8,995.5 1235.1,995 1235.3,994.6 1235.6,994.3 1235.8,994 1236.1,993.8 1236.3,993.7 1236.6,993.7 1236.8,993.8 1237.1,993.9 1237.3,994.1 1237.6,994.4 1237.8,994.8 1238.1,995.2 1238.3,995.7 1238.6,996.3 1238.8,996.8 1239.1,997.5 1239.3,998.1 1239.6,998.8 1239.8,999.5 1240.1,1000.1 1240.3,1000.8 1240.6,1001.5 1240.8,1002.1 1241.1,1002.7 1241.3,1003.3 1241.6,1003.8 1241.8,1004.3 1242.1,1004.7 1242.3,1005.1 1242.6,1005.4 1242.8,1005.7 1243.1,1005.8 1243.3,1005.9 1243.6,1005.9 1243.8,1005.9 1244.1,1005.8 1244.3,1005.6 1244.6,1005.4 1244.8,1005.1 1245.1,1004.7 1245.3,1004.3 1245.6,1003.9 1245.8,1003.4 1246.1,1002.8 1246.3,1002.3 1246.6,1001.7 1246.8,1001.1 1247.1,1000.6 1247.3,1000 1247.6,999.4 1247.8,998.9 1248.1,998.3 1248.3,997.8 1248.6,997.4 1248.8,996.9 1249.1,996.6 1249.3,996.2 1249.6,996 1249.8,995.8 1250.1,995.6 1250.3,995.5 1250.6,995.5 1250.8,995.5 1251.1,995.6 1251.3,995.7 1251.6,995.9 1251.8,996.2 1252.1,996.5 1252.3,996.8 1252.6,997.2 1252.8,997.6 1253.1,998 1253.3,998.5 1253.6,999 1253.8,999.5 1254.1,1000 1254.3,1000.5 1254.6,1001 1254.8,1001.4 1255.1,1001.9 1255.3,1002.3 1255.6,1002.7 1255.8,1003.1 1256.1,1003.4 1256.3,1003.7 1256.6,1004 1256.8,1004.1 1257.1,1004.3 1257.3,1004.4 1257.6,1004.4 1257.8,1004.4 1258.1,1004.4 1258.3,1004.2 1258.6,1004.1 1258.8,1003.9 1259.1,1003.6 1259.3,1003.4 1259.6,1003" fill="none" stroke="#2a8ce0" stroke-width="1.5" stroke-linejoin="round" clip-path="url(#c7)" />
<rect x="1259.8" y="955.1" width="30.8" height="190.8" fill="#1b5a8e"/>
<path d="M1259.8 960.1V950.1H1260.7V960.1M1260.9 1140.9V1150.9H1261.8V1140.9M1262.1 960.1V950.1H1263V960.1M1263.2 1140.9V1150.9H1264.1V1140.9M1264.4 960.1V950.1H1265.3V960.1M1265.5 1140.9V1150.9H1266.4V1140.9M1266.7 960.1V950.1H1267.6V960.1M1267.8 1140.9V1150.9H1268.7V1140.9M1269 960.1V950.1H1269.9V960.1M1270.1 1140.9V1150.9H1271V1140.9M1271.3 960.1V950.1H1272.2V960.1M1272.4 1140.9V1150.9H1273.3V1140.9M1273.6 960.1V950.1H1274.5V960.1M1274.7 1140.9V1150.9H1275.6V1140.9M1275.9 960.1V950.1H1276.8V960.1M1277 1140.9V1150.9H1277.9V1140.9M1278.2 960.1V950.1H1279.1V960.1M1279.3 1140.9V1150.9H1280.2V1140.9M1280.5 960.1V950.1H1281.4V960.1M1281.6 1140.9V1150.9H1282.5V1140.9M1282.8 960.1V950.1H1283.7V960.1M1283.9 1140.9V1150.9H1284.8V1140.9M1285.1 960.1V950.1H1286V960.1M1286.2 1140.9V1150.9H1287.1V1140.9M1287.4 960.1V950.1H1288.3V960.1M1288.5 1140.9V1150.9H1289.4V1140.9M1289.7 960.1V950.1H1290.6V960.1M1290.8 1140.9V1150.9H1291.7V1140.9" stroke="#e9d65c" stroke-width="1.2" fill="none" clip-path="url(#c7)"/>
<path d="M1260.2 958.7V1146.9M1262.6 955.9V1142.8M1265.1 953V1145.4M1267.4 958.1V1140.9M1269.6 955V1141.5M1272.1 958.1V1142.9M1274.1 951.4V1147.3M1276.6 954.7V1141.2M1278.8 955.8V1141.9M1281.4 956.9V1142.2M1283.9 959V1149M1286.1 955.3V1143.9M1288.4 958.5V1141.2" stroke="#2a8ce0" stroke-width="1.6" fill="none" clip-path="url(#c7)"/>
<path d="M1261.3 970.5L1261.9 1141.5M1263.4 955.7L1264 1143.8M1265.9 959.9L1266.5 1137.5M1268.3 972.7L1268.9 1135.4M1270.8 971.2L1271.4 1144.3M1273.3 967L1273.9 1133.1M1275.6 967.5L1276.2 1145.8M1277.8 974.7L1278.4 1127.7M1280.3 955.3L1280.9 1135.8M1282.6 964.1L1283.2 1140.8M1284.7 963L1285.3 1137M1287.1 971.6L1287.7 1129.2M1289.3 956.6L1289.9 1132.8" stroke="#2a86cc" stroke-width="1.1" fill="none" clip-path="url(#c7)"/>
<rect x="1595.5" y="935.5" width="100" height="38.8" fill="#000" stroke="#e6e6e6" stroke-width="1"/>
<path d="M1600 953H1612V943H1625" fill="none" stroke="#e9d65c" stroke-width="1.2"/>
<text x="1654.6" y="952.5" font-family="Liberation Sans" font-size="13" fill="#ececec">iqrRef</text>
<path d="M1600 970.9H1612V960.9H1625" fill="none" stroke="#2a8ce0" stroke-width="1.2"/>
<text x="1654.6" y="970.4" font-family="Liberation Sans" font-size="13" fill="#ececec">iqr</text>
<path d="M1719.5 1195V622.5H2283M1719.5 911.5H2283" stroke="#e8e8e8" stroke-width="1" fill="none"/>
<text x="1019" y="0.4" font-family="Liberation Sans" font-size="14" fill="#1a1a1a">파일(F)</text>
<text x="1082" y="0.4" font-family="Liberation Sans" font-size="14" fill="#1a1a1a">편집(E)</text>
<text x="1131" y="0.4" font-family="Liberation Sans" font-size="14" fill="#1a1a1a">보기(V)</text>
<text x="1206" y="0.4" font-family="Liberation Sans" font-size="14" fill="#1a1a1a">시뮬레이션(S)</text>
<text x="1302" y="0.4" font-family="Liberation Sans" font-size="14" fill="#1a1a1a">도움말(H)</text>
<rect x="1376" y="0" width="907" height="11" fill="#ffffff"/>
<path d="M1054.5 15V42" stroke="#8c8c8c" stroke-width="1"/>
<path d="M1174.5 15V42" stroke="#8c8c8c" stroke-width="1"/>
<path d="M1224.5 15V42" stroke="#8c8c8c" stroke-width="1"/>
<path d="M1274.5 15V42" stroke="#8c8c8c" stroke-width="1"/>
<path d="M1324.5 15V42" stroke="#8c8c8c" stroke-width="1"/>
<path d="M1041.5 25.5H1048.5L1045 29Z" fill="#333"/>
<path d="M1211.5 25.5H1218.5L1215 29Z" fill="#333"/>
<path d="M1261.5 25.5H1268.5L1265 29Z" fill="#333"/>
<path d="M1311.5 25.5H1318.5L1315 29Z" fill="#333"/>
<path d="M1389.5 25.5H1396.5L1393 29Z" fill="#333"/>
<defs><radialGradient id="gr2" cx="0.35" cy="0.3" r="0.8"><stop offset="0" stop-color="#f4ffe8"/><stop offset="0.45" stop-color="#a6dc5a"/><stop offset="1" stop-color="#5aa626"/></radialGradient><radialGradient id="gear" cx="0.4" cy="0.35" r="0.8"><stop offset="0" stop-color="#f2f2f2"/><stop offset="1" stop-color="#a8a8a8"/></radialGradient><linearGradient id="box" x1="0" y1="0" x2="1" y2="1"><stop offset="0" stop-color="#ffffff"/><stop offset="1" stop-color="#cfcfcf"/></linearGradient></defs>
<path d="M1031.06 26.07L1032.94 26.42L1032.94 28.58L1031.06 28.93L1030.77 29.96L1030.33 30.94L1031.54 32.42L1030.15 34.07L1028.49 33.13L1027.60 33.74L1026.63 34.20L1026.61 36.11L1024.49 36.49L1023.82 34.70L1022.75 34.59L1021.71 34.33L1020.47 35.78L1018.60 34.70L1019.23 32.90L1018.48 32.13L1017.86 31.26L1015.97 31.57L1015.24 29.54L1016.88 28.57L1016.80 27.50L1016.88 26.43L1015.24 25.46L1015.97 23.43L1017.86 23.74L1018.48 22.87L1019.23 22.10L1018.60 20.30L1020.47 19.22L1021.71 20.67L1022.75 20.41L1023.82 20.30L1024.49 18.51L1026.61 18.89L1026.63 20.80L1027.60 21.26L1028.49 21.87L1030.15 20.93L1031.54 22.58L1030.33 24.06L1030.77 25.04Z" fill="url(#gear)" stroke="#7a7a7a" stroke-width="0.9"/>
<circle cx="1024" cy="27.5" r="4" fill="none" stroke="#5a5a5a" stroke-width="1.6"/><circle cx="1024" cy="27.5" r="2.3" fill="#fafafa"/>
<path d="M1064.5 25.8L1076.5 18.8V32.5Z" fill="#a9cdee" stroke="#6a9ccc" stroke-width="0.8"/>
<rect x="1077" y="18.5" width="3" height="12" fill="#b8d8f4" stroke="#6a9ccc" stroke-width="0.7"/>
<path d="M1081.09 28.70L1082.35 28.94L1082.35 30.46L1081.09 30.70L1080.85 31.46L1080.48 32.16L1081.21 33.23L1080.13 34.31L1079.06 33.58L1078.36 33.95L1077.60 34.19L1077.36 35.45L1075.84 35.45L1075.60 34.19L1074.84 33.95L1074.14 33.58L1073.07 34.31L1071.99 33.23L1072.72 32.16L1072.35 31.46L1072.11 30.70L1070.85 30.46L1070.85 28.94L1072.11 28.70L1072.35 27.94L1072.72 27.24L1071.99 26.17L1073.07 25.09L1074.14 25.82L1074.84 25.45L1075.60 25.21L1075.84 23.95L1077.36 23.95L1077.60 25.21L1078.36 25.45L1079.06 25.82L1080.13 25.09L1081.21 26.17L1080.48 27.24L1080.85 27.94Z" fill="url(#gear)" stroke="#666" stroke-width="0.8"/>
<circle cx="1076.6" cy="29.7" r="2.6" fill="none" stroke="#444" stroke-width="1.2"/>
<circle cx="1100.9" cy="26.6" r="9.6" fill="url(#gr2)" stroke="#3c6e1c" stroke-width="1.1"/><path d="M1098 21.8L1105.3 26.8L1098 31.8Z" fill="#2c2c2c"/>
<rect x="1121.3" y="19.6" width="3.2" height="14.8" fill="#a8d0f0" stroke="#3c6ea6" stroke-width="0.8"/><path d="M1127 19.6L1137.5 27L1127 34.4Z" fill="#b4daf6" stroke="#3c6ea6" stroke-width="0.8"/>
<circle cx="1157" cy="26.6" r="10" fill="#a8a8a8"/><rect x="1153" y="22.6" width="8" height="8" fill="#8e8e8e"/>
<path d="M1184 22.3H1186M1194.8 22.3H1198.5V25.6" stroke="#d0702a" stroke-width="1" fill="none"/>
<rect x="1185.5" y="18.5" width="9.3" height="7.6" fill="#f6b070" stroke="#e08a3a" stroke-width="0.9"/>
<path d="M1184 33.5H1186M1194.3 33.5H1198.3V30.2M1200.8 28H1204" stroke="#333" stroke-width="1" fill="none"/>
<rect x="1186" y="30.6" width="8.3" height="5.7" fill="#f4f4f4" stroke="#444" stroke-width="0.9"/><ellipse cx="1198.4" cy="28" rx="2.6" ry="2.2" fill="#fafafa" stroke="#444" stroke-width="0.9"/>
<path d="M1241.5 18.3H1248M1241.5 36.3H1248" stroke="#222" stroke-width="2.2"/><path d="M1243 20L1244.7 22.3L1246.4 20M1243 34.5L1244.7 32.2L1246.4 34.5" stroke="#333" stroke-width="1.2" fill="none"/>
<circle cx="1244.7" cy="27.1" r="4.4" fill="#e8f2fa" stroke="#8a8a8a" stroke-width="1.5"/><path d="M1247.8 30.3L1252.6 33.6" stroke="#444" stroke-width="1.6"/>
<rect x="1284.5" y="18.8" width="19" height="18.6" fill="url(#box)" stroke="#2a2a2a" stroke-width="1.3"/>
<path d="M1290.3 25L1294 21.3L1297.7 25M1290.3 31.6L1294 35.3L1297.7 31.6" stroke="#3a3a3a" stroke-width="1.7" fill="none"/><path d="M1294 22V26M1294 30.5V34.5" stroke="#888" stroke-width="1.2"/>
<path d="M1335 34.5H1343.5V18.5H1350" stroke="#2c2c2c" stroke-width="3.4" fill="none" stroke-linejoin="miter"/>
<path d="M1336.5 28.5L1343.5 21.5L1350.5 28.5" stroke="#2c2c2c" stroke-width="2.6" fill="none"/><path d="M1343.5 19V34" stroke="#7a7a7a" stroke-width="0.9"/>
<rect x="1362.5" y="18.8" width="19" height="18.6" fill="#e4e4e4" stroke="#555" stroke-width="1"/>
<path d="M1363 37L1381.5 19" stroke="#444" stroke-width="0.8"/><path d="M1366.5 35.5L1380 22" stroke="#8cc8ec" stroke-width="5.5"/><path d="M1368.5 31.5l1.4 1.4M1371 29l1.4 1.4M1373.5 26.5l1.4 1.4M1376 24l1.4 1.4" stroke="#3a6a90" stroke-width="0.9"/>
</svg>
</body></html>
